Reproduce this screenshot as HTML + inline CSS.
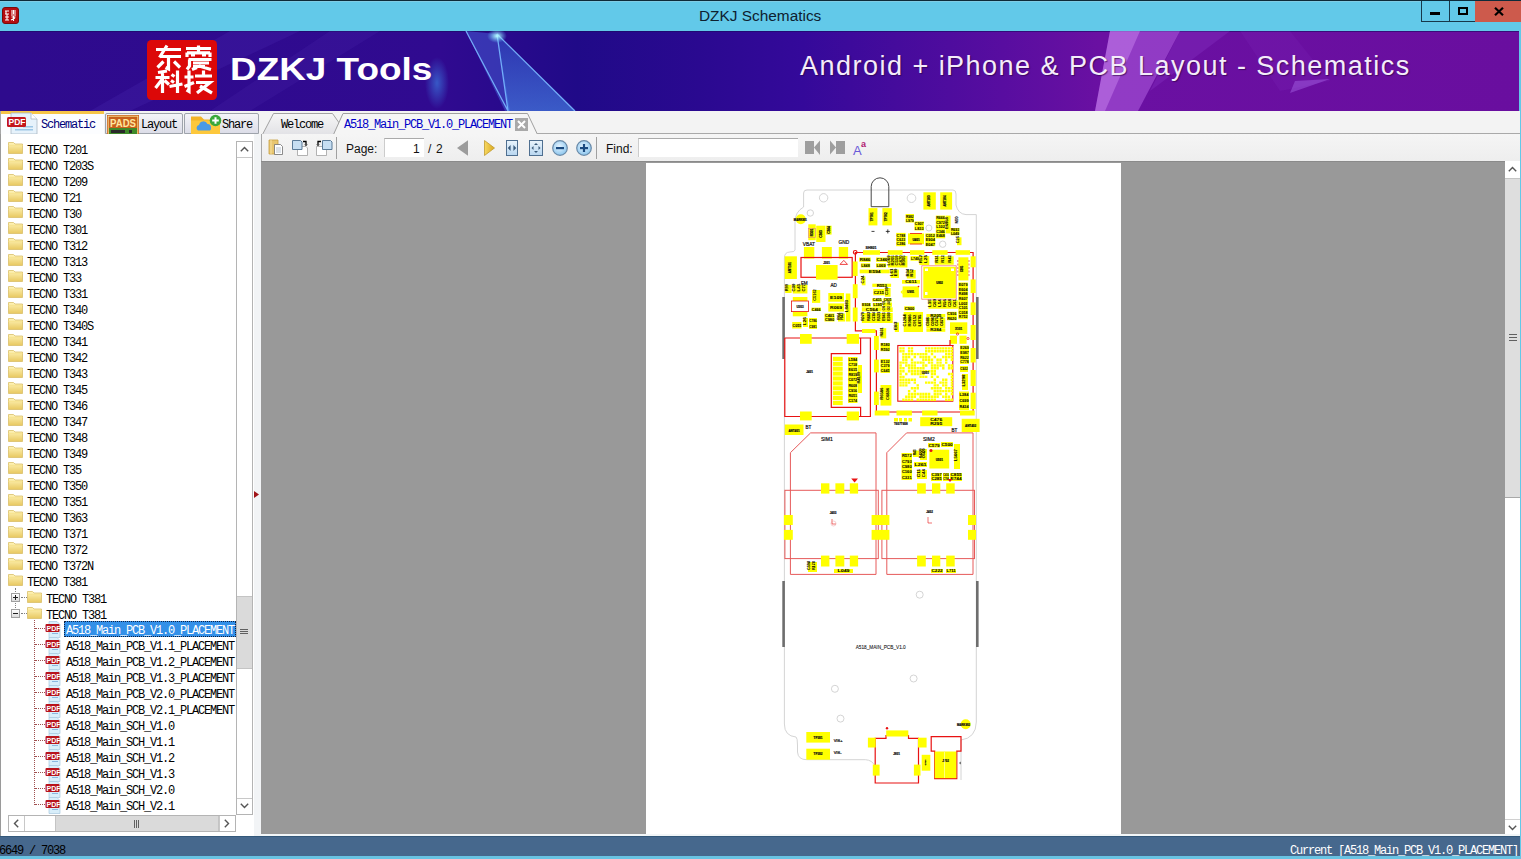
<!DOCTYPE html><html><head><meta charset="utf-8"><style>
*{margin:0;padding:0;box-sizing:border-box}
html,body{width:1521px;height:859px;overflow:hidden;background:#62c9e9;font-family:"Liberation Sans",sans-serif}
.a{position:absolute}
.m{position:absolute;font-family:"Liberation Mono",monospace;font-size:12px;letter-spacing:-1.2px;white-space:pre;line-height:14px}
svg{position:absolute;overflow:visible}
</style></head><body>
<div class="a" style="left:0px;top:0px;width:1521px;height:1px;background:#0d2b3a"></div>
<div class="a" style="left:0px;top:1px;width:1521px;height:1px;background:#7fcde6"></div>
<div class="a" style="left:0px;top:2px;width:1521px;height:29px;background:#62c9e9"></div>
<svg style="left:2px;top:7px" width="17" height="17" viewBox="0 0 17 17">
<rect x="0.5" y="0.5" width="16" height="16" rx="2.5" fill="#b40d10" stroke="#7a0a0a" stroke-width="1"/>
<path d="M3 4h4M4 4v3M3 7h4M5 7v3M3 10h4M3 13h4M5 10v3" stroke="#fff" stroke-width="1.1" fill="none"/>
<path d="M9 4h5M11.5 3v4M9 6h5M9 8h5M9.5 10h4M11.5 9v5M9 13l4-2" stroke="#fff" stroke-width="1.1" fill="none"/>
</svg>
<div class="a" style="left:699px;top:7px;font-size:15.4px;color:#0e2130;white-space:pre;line-height:17px">DZKJ Schematics</div>
<div class="a" style="left:1421px;top:1px;width:55px;height:21px;border:1px solid #17384a;border-top:none;background:#62c9e9"></div>
<div class="a" style="left:1449px;top:1px;width:1px;height:20px;background:#17384a"></div>
<div class="a" style="left:1430px;top:12px;width:10px;height:3px;background:#000"></div>
<div class="a" style="left:1458px;top:7px;width:10px;height:8px;border:2px solid #000;border-top-width:2px"></div>
<div class="a" style="left:1475px;top:1px;width:46px;height:21px;background:#cd5a4c"></div>
<svg style="left:1494px;top:7px" width="10" height="9" viewBox="0 0 10 9"><path d="M1 0.8L9 8.2M9 0.8L1 8.2" stroke="#000" stroke-width="2.2"/></svg>
<svg style="left:0;top:31px" width="1519" height="80" viewBox="0 0 1519 80">
<defs>
<linearGradient id="bg" x1="0" x2="1" y1="0" y2="0">
<stop offset="0" stop-color="#2e0b8d"/>
<stop offset="0.29" stop-color="#300a90"/>
<stop offset="0.38" stop-color="#200a88"/>
<stop offset="0.46" stop-color="#2a0990"/>
<stop offset="0.527" stop-color="#34099a"/>
<stop offset="0.59" stop-color="#450b9c"/>
<stop offset="0.66" stop-color="#580da0"/>
<stop offset="0.724" stop-color="#6a10a2"/>
<stop offset="1" stop-color="#690e9f"/>
</linearGradient>
<radialGradient id="glow" cx="0.5" cy="0.5" r="0.5">
<stop offset="0" stop-color="#3fa8ff" stop-opacity="0.9"/>
<stop offset="1" stop-color="#3fa8ff" stop-opacity="0"/>
</radialGradient>
<radialGradient id="glow2" cx="0.5" cy="0.5" r="0.5">
<stop offset="0" stop-color="#bff" stop-opacity="1"/>
<stop offset="1" stop-color="#6cf" stop-opacity="0"/>
</radialGradient>
<linearGradient id="tri" x1="0" x2="0" y1="0" y2="1"><stop offset="0" stop-color="#3050c8"/><stop offset="1" stop-color="#4a90f0"/></linearGradient>
</defs>
<rect width="1519" height="80" fill="url(#bg)"/>
<rect x="0" y="0" width="1519" height="1" fill="#1a0a60" opacity="0.6"/>
<polygon points="230,0 300,0 130,80 90,80" fill="#5a3ac0" opacity="0.18"/>
<polygon points="330,0 380,0 250,80 210,80" fill="#6a4ad0" opacity="0.10"/>
<polygon points="466,0 497,3 510,80 505,80" fill="#4a6ae0" opacity="0.45"/>
<polygon points="497,3 575,80 508,80" fill="url(#tri)" opacity="0.6"/>
<path d="M466 0L508 80M497 3L508 80M497 3L575 80" stroke="#79b8ff" stroke-width="1.3" fill="none" opacity="0.9"/>
<ellipse cx="497" cy="5" rx="10" ry="7" fill="url(#glow2)"/>
<ellipse cx="437" cy="52" rx="12" ry="26" fill="url(#glow)" opacity="0.55"/>
<polygon points="1110,0 1180,0 1138,80 1095,80" fill="#c070f0" opacity="0.45"/>
<polygon points="1110,0 1140,0 1105,80 1095,80" fill="#e0a0ff" opacity="0.35"/>
<polygon points="1180,0 1230,0 1150,60" fill="#a050e0" opacity="0.2"/>
<polygon points="1240,0 1290,0 1330,50 1280,60" fill="#8a3ad0" opacity="0.12"/>
<polygon points="1295,50 1330,48 1290,62" fill="#b070f0" opacity="0.4"/>
</svg>
<svg style="left:147px;top:40px" width="71" height="60" viewBox="0 0 71 60">
<rect x="0" y="0" width="70" height="60" rx="4.5" fill="#dc0808"/>
<g stroke="#fff" stroke-width="3.2" fill="none" stroke-linecap="butt" stroke-linejoin="miter">
<path d="M9 9.5h25M20 5.5L12.5 17.5M13 16.5h21M21.5 16.5v12.5l-3-1.5M16.5 21.5L10.5 27.5M27 21.5l6 6"/>
<path d="M39 8.5h25M51.5 5.5v7M40 12.5v4.5M63 12.5v4.5M40 12.8h23M44 15h4M55 15h4M41.5 19.5h23M42.5 19.5v6.5l-2.5 3.5M46 23h16M46 26.5h12M52 26l12 3.5M45 29.5l5-2"/>
<path d="M11 32.5l9-1.5M8.5 37.5h14M15.5 31.5v21.5M15 39.5L8.5 48M17.5 40.5l4.5 4M24.5 34.5l3 2M24 40.5l3 2M22.5 46.5l13-2.5M30.5 30.5v22.5"/>
<path d="M37.5 37h9M42 30.5v21l-2.5-1.5M37.5 46.5l9.5-4M48 36h17M56.5 30.5v6M49 42.5h14L50 53M53 46l12 7"/>
</g>
</svg>
<div class="a" style="left:230px;top:52px;font-size:31px;font-weight:700;color:#fff;white-space:pre;line-height:36px;transform-origin:0 0;transform:scaleX(1.19)">DZKJ Tools</div>
<div class="a" style="left:800px;top:51px;font-size:27px;color:#f4ecfa;white-space:pre;line-height:30px;letter-spacing:1.48px;text-shadow:1px 1px 1px rgba(40,0,60,0.6)">Android + iPhone &amp; PCB Layout - Schematics</div>
<div class="a" style="left:0px;top:111px;width:1521px;height:23px;background:#f3f3f3"></div>
<div class="a" style="left:0px;top:111px;width:104px;height:25px;background:#fcfdff;border-left:1px solid #a8a8a8"></div>
<div class="a" style="left:1px;top:111px;width:103px;height:3px;background:#f6c548"></div>
<svg style="left:6px;top:113px" width="34" height="22" viewBox="0 0 34 22">
<path d="M5 0h20l6 6v15H5z" fill="#e6f2fb" stroke="#a9b7c4" stroke-width="0.8"/>
<path d="M25 0v6h6" fill="#fff" stroke="#a9b7c4" stroke-width="0.8"/>
<rect x="17" y="13" width="10" height="1.5" fill="#9cc6e6"/><rect x="9" y="16" width="18" height="1.5" fill="#9cc6e6"/>
<rect x="1" y="4" width="19" height="10" rx="1.5" fill="#c3161c"/>
<text x="2.5" y="12.3" font-family="Liberation Sans" font-weight="700" font-size="8.5" fill="#fff">PDF</text>
</svg>
<div class="m" style="left:41px;top:118px;color:#00007a;">Schematic</div>
<div class="a" style="left:105px;top:113px;width:78px;height:21px;background:linear-gradient(#f4f4f8,#dcdde8);border:1px solid #9ea3ab;border-radius:2px 2px 0 0"></div>
<svg style="left:107px;top:115px" width="32" height="19" viewBox="0 0 32 19">
<rect x="0" y="0" width="32" height="19" fill="#c8601c"/>
<rect x="1.2" y="1.2" width="29.6" height="17" fill="none" stroke="#f6e090" stroke-width="0.9"/>
<text x="3" y="11.5" font-family="Liberation Sans" font-weight="700" font-size="11" fill="#ffe7a0" textLength="26" lengthAdjust="spacingAndGlyphs">PADS</text>
<rect x="2" y="13" width="28" height="6" fill="#3f8a2a"/>
<rect x="4" y="15" width="14" height="3" fill="#2a2a2a"/>
<rect x="22" y="15" width="3" height="3" fill="#2a2a2a"/>
</svg>
<div class="m" style="left:141px;top:118px;color:#000;">Layout</div>
<div class="a" style="left:184px;top:113px;width:75px;height:21px;background:linear-gradient(#f4f4f8,#dcdde8);border:1px solid #9ea3ab;border-radius:2px 2px 0 0"></div>
<svg style="left:190px;top:114px" width="32" height="20" viewBox="0 0 32 20">
<path d="M1 2.5h10l3 3h16v14.5H1z" fill="#f3b428"/>
<path d="M1 6.5h29v13.5H1z" fill="#fdc83c"/>
<path d="M8 16.5a3 3 0 0 1 1-5.5a4.5 4.5 0 0 1 8.5-1a3.5 3.5 0 0 1 3.5 3.5a2.8 2.8 0 0 1-1 3z" fill="#4a9ae6"/>
<circle cx="25.5" cy="6.5" r="5.8" fill="#3aa83a"/>
<path d="M25.5 3.2v6.6M22.2 6.5h6.6" stroke="#fff" stroke-width="2"/>
</svg>
<div class="m" style="left:222px;top:118px;color:#000;">Share</div>
<svg style="left:258px;top:111px" width="300" height="24" viewBox="0 0 300 24">
<defs><linearGradient id="tg" x1="0" x2="0" y1="0" y2="1"><stop offset="0" stop-color="#f6f6f6"/><stop offset="1" stop-color="#e2e2e6"/></linearGradient></defs>
<path d="M4.5 23.5L15.5 2.5H74.5L84 16L79 23.5Z" fill="url(#tg)" stroke="#a2a2a2" stroke-width="1"/>
<path d="M75.5 23.5L85 2.5H269.5L279.5 23.5" fill="#f5f5f5" stroke="#a0a0a0" stroke-width="1"/>
<rect x="257" y="7" width="13" height="13" fill="#a9a9a9"/>
<path d="M260 10l7 7M267 10l-7 7" stroke="#fff" stroke-width="2"/>
</svg>
<div class="a" style="left:537px;top:133px;width:983px;height:1px;background:#a9a9a9"></div>
<div class="m" style="left:281px;top:118px;color:#000;">Welcome</div>
<div class="m" style="left:344px;top:118px;color:#0000c8;">A518_Main_PCB_V1.0_PLACEMENT</div>
<div class="a" style="left:0px;top:134px;width:261px;height:702px;background:#fff"></div>
<div class="a" style="left:0px;top:134px;width:1px;height:702px;background:#9a9a9a"></div>
<div class="a" style="left:254px;top:134px;width:7px;height:702px;background:#f2f4f6"></div>
<svg style="left:254px;top:491px" width="5" height="7" viewBox="0 0 5 7"><path d="M0 0L5 3.5L0 7Z" fill="#a01418"/></svg>
<svg style="left:8px;top:141px" width="15" height="13" viewBox="0 0 15 13">
<defs><linearGradient id="fg0" x1="0" x2="0" y1="0" y2="1"><stop offset="0" stop-color="#fff4b8"/><stop offset="1" stop-color="#e8c860"/></linearGradient></defs>
<path d="M0.5 1.5h5l1.5 1.5h7.5v9.5H0.5z" fill="url(#fg0)" stroke="#d9bf6a" stroke-width="0.8"/>
<path d="M0.5 4.5h14" stroke="#f6e28e" stroke-width="0.8"/>
</svg>
<div class="m" style="left:27px;top:144px;color:#000;">TECNO T201</div>
<svg style="left:8px;top:157px" width="15" height="13" viewBox="0 0 15 13">
<defs><linearGradient id="fg1" x1="0" x2="0" y1="0" y2="1"><stop offset="0" stop-color="#fff4b8"/><stop offset="1" stop-color="#e8c860"/></linearGradient></defs>
<path d="M0.5 1.5h5l1.5 1.5h7.5v9.5H0.5z" fill="url(#fg1)" stroke="#d9bf6a" stroke-width="0.8"/>
<path d="M0.5 4.5h14" stroke="#f6e28e" stroke-width="0.8"/>
</svg>
<div class="m" style="left:27px;top:160px;color:#000;">TECNO T203S</div>
<svg style="left:8px;top:173px" width="15" height="13" viewBox="0 0 15 13">
<defs><linearGradient id="fg2" x1="0" x2="0" y1="0" y2="1"><stop offset="0" stop-color="#fff4b8"/><stop offset="1" stop-color="#e8c860"/></linearGradient></defs>
<path d="M0.5 1.5h5l1.5 1.5h7.5v9.5H0.5z" fill="url(#fg2)" stroke="#d9bf6a" stroke-width="0.8"/>
<path d="M0.5 4.5h14" stroke="#f6e28e" stroke-width="0.8"/>
</svg>
<div class="m" style="left:27px;top:176px;color:#000;">TECNO T209</div>
<svg style="left:8px;top:189px" width="15" height="13" viewBox="0 0 15 13">
<defs><linearGradient id="fg3" x1="0" x2="0" y1="0" y2="1"><stop offset="0" stop-color="#fff4b8"/><stop offset="1" stop-color="#e8c860"/></linearGradient></defs>
<path d="M0.5 1.5h5l1.5 1.5h7.5v9.5H0.5z" fill="url(#fg3)" stroke="#d9bf6a" stroke-width="0.8"/>
<path d="M0.5 4.5h14" stroke="#f6e28e" stroke-width="0.8"/>
</svg>
<div class="m" style="left:27px;top:192px;color:#000;">TECNO T21</div>
<svg style="left:8px;top:205px" width="15" height="13" viewBox="0 0 15 13">
<defs><linearGradient id="fg4" x1="0" x2="0" y1="0" y2="1"><stop offset="0" stop-color="#fff4b8"/><stop offset="1" stop-color="#e8c860"/></linearGradient></defs>
<path d="M0.5 1.5h5l1.5 1.5h7.5v9.5H0.5z" fill="url(#fg4)" stroke="#d9bf6a" stroke-width="0.8"/>
<path d="M0.5 4.5h14" stroke="#f6e28e" stroke-width="0.8"/>
</svg>
<div class="m" style="left:27px;top:208px;color:#000;">TECNO T30</div>
<svg style="left:8px;top:221px" width="15" height="13" viewBox="0 0 15 13">
<defs><linearGradient id="fg5" x1="0" x2="0" y1="0" y2="1"><stop offset="0" stop-color="#fff4b8"/><stop offset="1" stop-color="#e8c860"/></linearGradient></defs>
<path d="M0.5 1.5h5l1.5 1.5h7.5v9.5H0.5z" fill="url(#fg5)" stroke="#d9bf6a" stroke-width="0.8"/>
<path d="M0.5 4.5h14" stroke="#f6e28e" stroke-width="0.8"/>
</svg>
<div class="m" style="left:27px;top:224px;color:#000;">TECNO T301</div>
<svg style="left:8px;top:237px" width="15" height="13" viewBox="0 0 15 13">
<defs><linearGradient id="fg6" x1="0" x2="0" y1="0" y2="1"><stop offset="0" stop-color="#fff4b8"/><stop offset="1" stop-color="#e8c860"/></linearGradient></defs>
<path d="M0.5 1.5h5l1.5 1.5h7.5v9.5H0.5z" fill="url(#fg6)" stroke="#d9bf6a" stroke-width="0.8"/>
<path d="M0.5 4.5h14" stroke="#f6e28e" stroke-width="0.8"/>
</svg>
<div class="m" style="left:27px;top:240px;color:#000;">TECNO T312</div>
<svg style="left:8px;top:253px" width="15" height="13" viewBox="0 0 15 13">
<defs><linearGradient id="fg7" x1="0" x2="0" y1="0" y2="1"><stop offset="0" stop-color="#fff4b8"/><stop offset="1" stop-color="#e8c860"/></linearGradient></defs>
<path d="M0.5 1.5h5l1.5 1.5h7.5v9.5H0.5z" fill="url(#fg7)" stroke="#d9bf6a" stroke-width="0.8"/>
<path d="M0.5 4.5h14" stroke="#f6e28e" stroke-width="0.8"/>
</svg>
<div class="m" style="left:27px;top:256px;color:#000;">TECNO T313</div>
<svg style="left:8px;top:269px" width="15" height="13" viewBox="0 0 15 13">
<defs><linearGradient id="fg8" x1="0" x2="0" y1="0" y2="1"><stop offset="0" stop-color="#fff4b8"/><stop offset="1" stop-color="#e8c860"/></linearGradient></defs>
<path d="M0.5 1.5h5l1.5 1.5h7.5v9.5H0.5z" fill="url(#fg8)" stroke="#d9bf6a" stroke-width="0.8"/>
<path d="M0.5 4.5h14" stroke="#f6e28e" stroke-width="0.8"/>
</svg>
<div class="m" style="left:27px;top:272px;color:#000;">TECNO T33</div>
<svg style="left:8px;top:285px" width="15" height="13" viewBox="0 0 15 13">
<defs><linearGradient id="fg9" x1="0" x2="0" y1="0" y2="1"><stop offset="0" stop-color="#fff4b8"/><stop offset="1" stop-color="#e8c860"/></linearGradient></defs>
<path d="M0.5 1.5h5l1.5 1.5h7.5v9.5H0.5z" fill="url(#fg9)" stroke="#d9bf6a" stroke-width="0.8"/>
<path d="M0.5 4.5h14" stroke="#f6e28e" stroke-width="0.8"/>
</svg>
<div class="m" style="left:27px;top:288px;color:#000;">TECNO T331</div>
<svg style="left:8px;top:301px" width="15" height="13" viewBox="0 0 15 13">
<defs><linearGradient id="fg10" x1="0" x2="0" y1="0" y2="1"><stop offset="0" stop-color="#fff4b8"/><stop offset="1" stop-color="#e8c860"/></linearGradient></defs>
<path d="M0.5 1.5h5l1.5 1.5h7.5v9.5H0.5z" fill="url(#fg10)" stroke="#d9bf6a" stroke-width="0.8"/>
<path d="M0.5 4.5h14" stroke="#f6e28e" stroke-width="0.8"/>
</svg>
<div class="m" style="left:27px;top:304px;color:#000;">TECNO T340</div>
<svg style="left:8px;top:317px" width="15" height="13" viewBox="0 0 15 13">
<defs><linearGradient id="fg11" x1="0" x2="0" y1="0" y2="1"><stop offset="0" stop-color="#fff4b8"/><stop offset="1" stop-color="#e8c860"/></linearGradient></defs>
<path d="M0.5 1.5h5l1.5 1.5h7.5v9.5H0.5z" fill="url(#fg11)" stroke="#d9bf6a" stroke-width="0.8"/>
<path d="M0.5 4.5h14" stroke="#f6e28e" stroke-width="0.8"/>
</svg>
<div class="m" style="left:27px;top:320px;color:#000;">TECNO T340S</div>
<svg style="left:8px;top:333px" width="15" height="13" viewBox="0 0 15 13">
<defs><linearGradient id="fg12" x1="0" x2="0" y1="0" y2="1"><stop offset="0" stop-color="#fff4b8"/><stop offset="1" stop-color="#e8c860"/></linearGradient></defs>
<path d="M0.5 1.5h5l1.5 1.5h7.5v9.5H0.5z" fill="url(#fg12)" stroke="#d9bf6a" stroke-width="0.8"/>
<path d="M0.5 4.5h14" stroke="#f6e28e" stroke-width="0.8"/>
</svg>
<div class="m" style="left:27px;top:336px;color:#000;">TECNO T341</div>
<svg style="left:8px;top:349px" width="15" height="13" viewBox="0 0 15 13">
<defs><linearGradient id="fg13" x1="0" x2="0" y1="0" y2="1"><stop offset="0" stop-color="#fff4b8"/><stop offset="1" stop-color="#e8c860"/></linearGradient></defs>
<path d="M0.5 1.5h5l1.5 1.5h7.5v9.5H0.5z" fill="url(#fg13)" stroke="#d9bf6a" stroke-width="0.8"/>
<path d="M0.5 4.5h14" stroke="#f6e28e" stroke-width="0.8"/>
</svg>
<div class="m" style="left:27px;top:352px;color:#000;">TECNO T342</div>
<svg style="left:8px;top:365px" width="15" height="13" viewBox="0 0 15 13">
<defs><linearGradient id="fg14" x1="0" x2="0" y1="0" y2="1"><stop offset="0" stop-color="#fff4b8"/><stop offset="1" stop-color="#e8c860"/></linearGradient></defs>
<path d="M0.5 1.5h5l1.5 1.5h7.5v9.5H0.5z" fill="url(#fg14)" stroke="#d9bf6a" stroke-width="0.8"/>
<path d="M0.5 4.5h14" stroke="#f6e28e" stroke-width="0.8"/>
</svg>
<div class="m" style="left:27px;top:368px;color:#000;">TECNO T343</div>
<svg style="left:8px;top:381px" width="15" height="13" viewBox="0 0 15 13">
<defs><linearGradient id="fg15" x1="0" x2="0" y1="0" y2="1"><stop offset="0" stop-color="#fff4b8"/><stop offset="1" stop-color="#e8c860"/></linearGradient></defs>
<path d="M0.5 1.5h5l1.5 1.5h7.5v9.5H0.5z" fill="url(#fg15)" stroke="#d9bf6a" stroke-width="0.8"/>
<path d="M0.5 4.5h14" stroke="#f6e28e" stroke-width="0.8"/>
</svg>
<div class="m" style="left:27px;top:384px;color:#000;">TECNO T345</div>
<svg style="left:8px;top:397px" width="15" height="13" viewBox="0 0 15 13">
<defs><linearGradient id="fg16" x1="0" x2="0" y1="0" y2="1"><stop offset="0" stop-color="#fff4b8"/><stop offset="1" stop-color="#e8c860"/></linearGradient></defs>
<path d="M0.5 1.5h5l1.5 1.5h7.5v9.5H0.5z" fill="url(#fg16)" stroke="#d9bf6a" stroke-width="0.8"/>
<path d="M0.5 4.5h14" stroke="#f6e28e" stroke-width="0.8"/>
</svg>
<div class="m" style="left:27px;top:400px;color:#000;">TECNO T346</div>
<svg style="left:8px;top:413px" width="15" height="13" viewBox="0 0 15 13">
<defs><linearGradient id="fg17" x1="0" x2="0" y1="0" y2="1"><stop offset="0" stop-color="#fff4b8"/><stop offset="1" stop-color="#e8c860"/></linearGradient></defs>
<path d="M0.5 1.5h5l1.5 1.5h7.5v9.5H0.5z" fill="url(#fg17)" stroke="#d9bf6a" stroke-width="0.8"/>
<path d="M0.5 4.5h14" stroke="#f6e28e" stroke-width="0.8"/>
</svg>
<div class="m" style="left:27px;top:416px;color:#000;">TECNO T347</div>
<svg style="left:8px;top:429px" width="15" height="13" viewBox="0 0 15 13">
<defs><linearGradient id="fg18" x1="0" x2="0" y1="0" y2="1"><stop offset="0" stop-color="#fff4b8"/><stop offset="1" stop-color="#e8c860"/></linearGradient></defs>
<path d="M0.5 1.5h5l1.5 1.5h7.5v9.5H0.5z" fill="url(#fg18)" stroke="#d9bf6a" stroke-width="0.8"/>
<path d="M0.5 4.5h14" stroke="#f6e28e" stroke-width="0.8"/>
</svg>
<div class="m" style="left:27px;top:432px;color:#000;">TECNO T348</div>
<svg style="left:8px;top:445px" width="15" height="13" viewBox="0 0 15 13">
<defs><linearGradient id="fg19" x1="0" x2="0" y1="0" y2="1"><stop offset="0" stop-color="#fff4b8"/><stop offset="1" stop-color="#e8c860"/></linearGradient></defs>
<path d="M0.5 1.5h5l1.5 1.5h7.5v9.5H0.5z" fill="url(#fg19)" stroke="#d9bf6a" stroke-width="0.8"/>
<path d="M0.5 4.5h14" stroke="#f6e28e" stroke-width="0.8"/>
</svg>
<div class="m" style="left:27px;top:448px;color:#000;">TECNO T349</div>
<svg style="left:8px;top:461px" width="15" height="13" viewBox="0 0 15 13">
<defs><linearGradient id="fg20" x1="0" x2="0" y1="0" y2="1"><stop offset="0" stop-color="#fff4b8"/><stop offset="1" stop-color="#e8c860"/></linearGradient></defs>
<path d="M0.5 1.5h5l1.5 1.5h7.5v9.5H0.5z" fill="url(#fg20)" stroke="#d9bf6a" stroke-width="0.8"/>
<path d="M0.5 4.5h14" stroke="#f6e28e" stroke-width="0.8"/>
</svg>
<div class="m" style="left:27px;top:464px;color:#000;">TECNO T35</div>
<svg style="left:8px;top:477px" width="15" height="13" viewBox="0 0 15 13">
<defs><linearGradient id="fg21" x1="0" x2="0" y1="0" y2="1"><stop offset="0" stop-color="#fff4b8"/><stop offset="1" stop-color="#e8c860"/></linearGradient></defs>
<path d="M0.5 1.5h5l1.5 1.5h7.5v9.5H0.5z" fill="url(#fg21)" stroke="#d9bf6a" stroke-width="0.8"/>
<path d="M0.5 4.5h14" stroke="#f6e28e" stroke-width="0.8"/>
</svg>
<div class="m" style="left:27px;top:480px;color:#000;">TECNO T350</div>
<svg style="left:8px;top:493px" width="15" height="13" viewBox="0 0 15 13">
<defs><linearGradient id="fg22" x1="0" x2="0" y1="0" y2="1"><stop offset="0" stop-color="#fff4b8"/><stop offset="1" stop-color="#e8c860"/></linearGradient></defs>
<path d="M0.5 1.5h5l1.5 1.5h7.5v9.5H0.5z" fill="url(#fg22)" stroke="#d9bf6a" stroke-width="0.8"/>
<path d="M0.5 4.5h14" stroke="#f6e28e" stroke-width="0.8"/>
</svg>
<div class="m" style="left:27px;top:496px;color:#000;">TECNO T351</div>
<svg style="left:8px;top:509px" width="15" height="13" viewBox="0 0 15 13">
<defs><linearGradient id="fg23" x1="0" x2="0" y1="0" y2="1"><stop offset="0" stop-color="#fff4b8"/><stop offset="1" stop-color="#e8c860"/></linearGradient></defs>
<path d="M0.5 1.5h5l1.5 1.5h7.5v9.5H0.5z" fill="url(#fg23)" stroke="#d9bf6a" stroke-width="0.8"/>
<path d="M0.5 4.5h14" stroke="#f6e28e" stroke-width="0.8"/>
</svg>
<div class="m" style="left:27px;top:512px;color:#000;">TECNO T363</div>
<svg style="left:8px;top:525px" width="15" height="13" viewBox="0 0 15 13">
<defs><linearGradient id="fg24" x1="0" x2="0" y1="0" y2="1"><stop offset="0" stop-color="#fff4b8"/><stop offset="1" stop-color="#e8c860"/></linearGradient></defs>
<path d="M0.5 1.5h5l1.5 1.5h7.5v9.5H0.5z" fill="url(#fg24)" stroke="#d9bf6a" stroke-width="0.8"/>
<path d="M0.5 4.5h14" stroke="#f6e28e" stroke-width="0.8"/>
</svg>
<div class="m" style="left:27px;top:528px;color:#000;">TECNO T371</div>
<svg style="left:8px;top:541px" width="15" height="13" viewBox="0 0 15 13">
<defs><linearGradient id="fg25" x1="0" x2="0" y1="0" y2="1"><stop offset="0" stop-color="#fff4b8"/><stop offset="1" stop-color="#e8c860"/></linearGradient></defs>
<path d="M0.5 1.5h5l1.5 1.5h7.5v9.5H0.5z" fill="url(#fg25)" stroke="#d9bf6a" stroke-width="0.8"/>
<path d="M0.5 4.5h14" stroke="#f6e28e" stroke-width="0.8"/>
</svg>
<div class="m" style="left:27px;top:544px;color:#000;">TECNO T372</div>
<svg style="left:8px;top:557px" width="15" height="13" viewBox="0 0 15 13">
<defs><linearGradient id="fg26" x1="0" x2="0" y1="0" y2="1"><stop offset="0" stop-color="#fff4b8"/><stop offset="1" stop-color="#e8c860"/></linearGradient></defs>
<path d="M0.5 1.5h5l1.5 1.5h7.5v9.5H0.5z" fill="url(#fg26)" stroke="#d9bf6a" stroke-width="0.8"/>
<path d="M0.5 4.5h14" stroke="#f6e28e" stroke-width="0.8"/>
</svg>
<div class="m" style="left:27px;top:560px;color:#000;">TECNO T372N</div>
<svg style="left:8px;top:573px" width="15" height="13" viewBox="0 0 15 13">
<defs><linearGradient id="fg27" x1="0" x2="0" y1="0" y2="1"><stop offset="0" stop-color="#fff4b8"/><stop offset="1" stop-color="#e8c860"/></linearGradient></defs>
<path d="M0.5 1.5h5l1.5 1.5h7.5v9.5H0.5z" fill="url(#fg27)" stroke="#d9bf6a" stroke-width="0.8"/>
<path d="M0.5 4.5h14" stroke="#f6e28e" stroke-width="0.8"/>
</svg>
<div class="m" style="left:27px;top:576px;color:#000;">TECNO T381</div>
<div class="a" style="left:15px;top:588px;width:1px;height:22px;border-left:1px dotted #808080"></div>
<div class="a" style="left:11px;top:593px;width:9px;height:9px;border:1px solid #a0a0a0;background:linear-gradient(#fff,#dcdcdc)"></div>
<div class="a" style="left:13px;top:597px;width:5px;height:1px;background:#202020"></div>
<div class="a" style="left:15px;top:595px;width:1px;height:5px;background:#202020"></div>
<div class="a" style="left:21px;top:597px;width:6px;height:1px;border-top:1px dotted #808080"></div>
<svg style="left:27px;top:590px" width="15" height="13" viewBox="0 0 15 13">
<defs><linearGradient id="fg28" x1="0" x2="0" y1="0" y2="1"><stop offset="0" stop-color="#fff4b8"/><stop offset="1" stop-color="#e8c860"/></linearGradient></defs>
<path d="M0.5 1.5h5l1.5 1.5h7.5v9.5H0.5z" fill="url(#fg28)" stroke="#d9bf6a" stroke-width="0.8"/>
<path d="M0.5 4.5h14" stroke="#f6e28e" stroke-width="0.8"/>
</svg>
<div class="m" style="left:46px;top:593px;color:#000;">TECNO T381</div>
<div class="a" style="left:11px;top:609px;width:9px;height:9px;border:1px solid #a0a0a0;background:linear-gradient(#fff,#dcdcdc)"></div>
<div class="a" style="left:13px;top:613px;width:5px;height:1px;background:#202020"></div>
<div class="a" style="left:21px;top:613px;width:6px;height:1px;border-top:1px dotted #808080"></div>
<svg style="left:27px;top:606px" width="15" height="13" viewBox="0 0 15 13">
<defs><linearGradient id="fg29" x1="0" x2="0" y1="0" y2="1"><stop offset="0" stop-color="#fff4b8"/><stop offset="1" stop-color="#e8c860"/></linearGradient></defs>
<path d="M0.5 1.5h5l1.5 1.5h7.5v9.5H0.5z" fill="url(#fg29)" stroke="#d9bf6a" stroke-width="0.8"/>
<path d="M0.5 4.5h14" stroke="#f6e28e" stroke-width="0.8"/>
</svg>
<div class="m" style="left:46px;top:609px;color:#000;">TECNO T381</div>
<div class="a" style="left:34px;top:620px;width:1px;height:185px;border-left:1px dotted #a05050"></div>
<div class="a" style="left:35px;top:628px;width:10px;height:1px;border-top:1px dotted #a05050"></div>
<svg style="left:45px;top:621px" width="16" height="17" viewBox="0 0 16 17">
<path d="M4 0.5h8l3 3v13H4z" fill="#d8eefa" stroke="#a8c8e0" stroke-width="0.7"/>
<rect x="7" y="12" width="6" height="1" fill="#8ab8e0"/>
<rect x="0.5" y="3" width="14" height="8" rx="1" fill="#b8141c"/>
<text x="1.6" y="9.6" font-family="Liberation Sans" font-weight="700" font-size="7" fill="#fff">PDF</text>
</svg>
<div class="a" style="left:64px;top:621px;width:172px;height:16px;background:#3390e8;outline:1px dotted #102040;outline-offset:-1px"></div>
<div class="m" style="left:66px;top:624px;color:#fff;">A518_Main_PCB_V1.0_PLACEMENT</div>
<div class="a" style="left:35px;top:644px;width:10px;height:1px;border-top:1px dotted #a05050"></div>
<svg style="left:45px;top:637px" width="16" height="17" viewBox="0 0 16 17">
<path d="M4 0.5h8l3 3v13H4z" fill="#d8eefa" stroke="#a8c8e0" stroke-width="0.7"/>
<rect x="7" y="12" width="6" height="1" fill="#8ab8e0"/>
<rect x="0.5" y="3" width="14" height="8" rx="1" fill="#b8141c"/>
<text x="1.6" y="9.6" font-family="Liberation Sans" font-weight="700" font-size="7" fill="#fff">PDF</text>
</svg>
<div class="m" style="left:66px;top:640px;color:#000;">A518_Main_PCB_V1.1_PLACEMENT</div>
<div class="a" style="left:35px;top:660px;width:10px;height:1px;border-top:1px dotted #a05050"></div>
<svg style="left:45px;top:653px" width="16" height="17" viewBox="0 0 16 17">
<path d="M4 0.5h8l3 3v13H4z" fill="#d8eefa" stroke="#a8c8e0" stroke-width="0.7"/>
<rect x="7" y="12" width="6" height="1" fill="#8ab8e0"/>
<rect x="0.5" y="3" width="14" height="8" rx="1" fill="#b8141c"/>
<text x="1.6" y="9.6" font-family="Liberation Sans" font-weight="700" font-size="7" fill="#fff">PDF</text>
</svg>
<div class="m" style="left:66px;top:656px;color:#000;">A518_Main_PCB_V1.2_PLACEMENT</div>
<div class="a" style="left:35px;top:676px;width:10px;height:1px;border-top:1px dotted #a05050"></div>
<svg style="left:45px;top:669px" width="16" height="17" viewBox="0 0 16 17">
<path d="M4 0.5h8l3 3v13H4z" fill="#d8eefa" stroke="#a8c8e0" stroke-width="0.7"/>
<rect x="7" y="12" width="6" height="1" fill="#8ab8e0"/>
<rect x="0.5" y="3" width="14" height="8" rx="1" fill="#b8141c"/>
<text x="1.6" y="9.6" font-family="Liberation Sans" font-weight="700" font-size="7" fill="#fff">PDF</text>
</svg>
<div class="m" style="left:66px;top:672px;color:#000;">A518_Main_PCB_V1.3_PLACEMENT</div>
<div class="a" style="left:35px;top:692px;width:10px;height:1px;border-top:1px dotted #a05050"></div>
<svg style="left:45px;top:685px" width="16" height="17" viewBox="0 0 16 17">
<path d="M4 0.5h8l3 3v13H4z" fill="#d8eefa" stroke="#a8c8e0" stroke-width="0.7"/>
<rect x="7" y="12" width="6" height="1" fill="#8ab8e0"/>
<rect x="0.5" y="3" width="14" height="8" rx="1" fill="#b8141c"/>
<text x="1.6" y="9.6" font-family="Liberation Sans" font-weight="700" font-size="7" fill="#fff">PDF</text>
</svg>
<div class="m" style="left:66px;top:688px;color:#000;">A518_Main_PCB_V2.0_PLACEMENT</div>
<div class="a" style="left:35px;top:708px;width:10px;height:1px;border-top:1px dotted #a05050"></div>
<svg style="left:45px;top:701px" width="16" height="17" viewBox="0 0 16 17">
<path d="M4 0.5h8l3 3v13H4z" fill="#d8eefa" stroke="#a8c8e0" stroke-width="0.7"/>
<rect x="7" y="12" width="6" height="1" fill="#8ab8e0"/>
<rect x="0.5" y="3" width="14" height="8" rx="1" fill="#b8141c"/>
<text x="1.6" y="9.6" font-family="Liberation Sans" font-weight="700" font-size="7" fill="#fff">PDF</text>
</svg>
<div class="m" style="left:66px;top:704px;color:#000;">A518_Main_PCB_V2.1_PLACEMENT</div>
<div class="a" style="left:35px;top:724px;width:10px;height:1px;border-top:1px dotted #a05050"></div>
<svg style="left:45px;top:717px" width="16" height="17" viewBox="0 0 16 17">
<path d="M4 0.5h8l3 3v13H4z" fill="#d8eefa" stroke="#a8c8e0" stroke-width="0.7"/>
<rect x="7" y="12" width="6" height="1" fill="#8ab8e0"/>
<rect x="0.5" y="3" width="14" height="8" rx="1" fill="#b8141c"/>
<text x="1.6" y="9.6" font-family="Liberation Sans" font-weight="700" font-size="7" fill="#fff">PDF</text>
</svg>
<div class="m" style="left:66px;top:720px;color:#000;">A518_Main_SCH_V1.0</div>
<div class="a" style="left:35px;top:740px;width:10px;height:1px;border-top:1px dotted #a05050"></div>
<svg style="left:45px;top:733px" width="16" height="17" viewBox="0 0 16 17">
<path d="M4 0.5h8l3 3v13H4z" fill="#d8eefa" stroke="#a8c8e0" stroke-width="0.7"/>
<rect x="7" y="12" width="6" height="1" fill="#8ab8e0"/>
<rect x="0.5" y="3" width="14" height="8" rx="1" fill="#b8141c"/>
<text x="1.6" y="9.6" font-family="Liberation Sans" font-weight="700" font-size="7" fill="#fff">PDF</text>
</svg>
<div class="m" style="left:66px;top:736px;color:#000;">A518_Main_SCH_V1.1</div>
<div class="a" style="left:35px;top:756px;width:10px;height:1px;border-top:1px dotted #a05050"></div>
<svg style="left:45px;top:749px" width="16" height="17" viewBox="0 0 16 17">
<path d="M4 0.5h8l3 3v13H4z" fill="#d8eefa" stroke="#a8c8e0" stroke-width="0.7"/>
<rect x="7" y="12" width="6" height="1" fill="#8ab8e0"/>
<rect x="0.5" y="3" width="14" height="8" rx="1" fill="#b8141c"/>
<text x="1.6" y="9.6" font-family="Liberation Sans" font-weight="700" font-size="7" fill="#fff">PDF</text>
</svg>
<div class="m" style="left:66px;top:752px;color:#000;">A518_Main_SCH_V1.2</div>
<div class="a" style="left:35px;top:772px;width:10px;height:1px;border-top:1px dotted #a05050"></div>
<svg style="left:45px;top:765px" width="16" height="17" viewBox="0 0 16 17">
<path d="M4 0.5h8l3 3v13H4z" fill="#d8eefa" stroke="#a8c8e0" stroke-width="0.7"/>
<rect x="7" y="12" width="6" height="1" fill="#8ab8e0"/>
<rect x="0.5" y="3" width="14" height="8" rx="1" fill="#b8141c"/>
<text x="1.6" y="9.6" font-family="Liberation Sans" font-weight="700" font-size="7" fill="#fff">PDF</text>
</svg>
<div class="m" style="left:66px;top:768px;color:#000;">A518_Main_SCH_V1.3</div>
<div class="a" style="left:35px;top:788px;width:10px;height:1px;border-top:1px dotted #a05050"></div>
<svg style="left:45px;top:781px" width="16" height="17" viewBox="0 0 16 17">
<path d="M4 0.5h8l3 3v13H4z" fill="#d8eefa" stroke="#a8c8e0" stroke-width="0.7"/>
<rect x="7" y="12" width="6" height="1" fill="#8ab8e0"/>
<rect x="0.5" y="3" width="14" height="8" rx="1" fill="#b8141c"/>
<text x="1.6" y="9.6" font-family="Liberation Sans" font-weight="700" font-size="7" fill="#fff">PDF</text>
</svg>
<div class="m" style="left:66px;top:784px;color:#000;">A518_Main_SCH_V2.0</div>
<div class="a" style="left:35px;top:804px;width:10px;height:1px;border-top:1px dotted #a05050"></div>
<svg style="left:45px;top:797px" width="16" height="17" viewBox="0 0 16 17">
<path d="M4 0.5h8l3 3v13H4z" fill="#d8eefa" stroke="#a8c8e0" stroke-width="0.7"/>
<rect x="7" y="12" width="6" height="1" fill="#8ab8e0"/>
<rect x="0.5" y="3" width="14" height="8" rx="1" fill="#b8141c"/>
<text x="1.6" y="9.6" font-family="Liberation Sans" font-weight="700" font-size="7" fill="#fff">PDF</text>
</svg>
<div class="m" style="left:66px;top:800px;color:#000;">A518_Main_SCH_V2.1</div>
<div class="a" style="left:236px;top:141px;width:17px;height:674px;background:#fff;border:1px solid #b4b4b4"></div>
<div class="a" style="left:237px;top:157px;width:15px;height:1px;background:#c8c8c8"></div>
<svg style="left:240px;top:146px" width="9" height="6" viewBox="0 0 9 6"><path d="M0.8 5.2L4.5 1.5L8.2 5.2" stroke="#555" stroke-width="1.4" fill="none"/></svg>
<div class="a" style="left:237px;top:596px;width:15px;height:73px;background:#dadada;border-top:1px solid #c4c4c4;border-bottom:1px solid #c4c4c4"></div>
<svg style="left:240px;top:629px" width="8" height="6" viewBox="0 0 8 6"><path d="M0 0.5h8M0 2.5h8M0 4.5h8" stroke="#606060" stroke-width="1"/></svg>
<div class="a" style="left:237px;top:798px;width:15px;height:1px;background:#c8c8c8"></div>
<svg style="left:240px;top:803px" width="9" height="6" viewBox="0 0 9 6"><path d="M0.8 0.8L4.5 4.5L8.2 0.8" stroke="#555" stroke-width="1.4" fill="none"/></svg>
<div class="a" style="left:8px;top:815px;width:228px;height:17px;background:#fff;border:1px solid #b4b4b4"></div>
<div class="a" style="left:24px;top:816px;width:1px;height:15px;background:#c8c8c8"></div>
<svg style="left:13px;top:819px" width="6" height="9" viewBox="0 0 6 9"><path d="M5.2 0.8L1.5 4.5L5.2 8.2" stroke="#555" stroke-width="1.4" fill="none"/></svg>
<div class="a" style="left:55px;top:816px;width:164px;height:15px;background:#dadada;border-left:1px solid #c4c4c4;border-right:1px solid #c4c4c4"></div>
<svg style="left:134px;top:820px" width="6" height="8" viewBox="0 0 6 8"><path d="M0.5 0v8M2.5 0v8M4.5 0v8" stroke="#606060" stroke-width="1"/></svg>
<div class="a" style="left:219px;top:816px;width:1px;height:15px;background:#c8c8c8"></div>
<svg style="left:224px;top:819px" width="6" height="9" viewBox="0 0 6 9"><path d="M0.8 0.8L4.5 4.5L0.8 8.2" stroke="#555" stroke-width="1.4" fill="none"/></svg>
<div class="a" style="left:261px;top:134px;width:1260px;height:27px;background:linear-gradient(#f5f5f5,#eeeeee)"></div>
<div class="a" style="left:261px;top:134px;width:1px;height:27px;background:#a8a8a8"></div>
<svg style="left:268px;top:139px" width="18" height="17" viewBox="0 0 18 17">
<path d="M1 1h9v14H1z" fill="#e8c670" stroke="#c8a040" stroke-width="0.8"/>
<path d="M3 1v14" stroke="#f6e0a0" stroke-width="1"/>
<path d="M6.5 5.5h6l2 2v8h-8z" fill="#fff" stroke="#707070" stroke-width="0.8"/>
<path d="M8 9h5M8 11h5M8 13h5" stroke="#9ab" stroke-width="0.7"/>
</svg>
<svg style="left:291px;top:139px" width="19" height="18" viewBox="0 0 19 18">
<path d="M6.5 7.5h8.5l1.5 1.5v7.5h-10z" fill="#fff" stroke="#a0a0a0" stroke-width="0.8"/>
<path d="M1.5 1.5h8l1.5 1.5v7.5h-9.5z" fill="#c6def2" stroke="#5a7a98" stroke-width="1"/>
<path d="M12 2.5h3v3" stroke="#000" stroke-width="1.3" fill="none"/><path d="M13.2 5.5l1.8 1.6 1.8-1.6z" fill="#000"/>
</svg>
<svg style="left:315px;top:139px" width="19" height="18" viewBox="0 0 19 18">
<path d="M1.5 7.5h8.5l1.5 1.5v7.5h-10z" fill="#fff" stroke="#a0a0a0" stroke-width="0.8"/>
<path d="M7.5 1.5h8l1.5 1.5v7.5h-9.5z" fill="#c6def2" stroke="#5a7a98" stroke-width="1"/>
<path d="M6 2.5h-3v3" stroke="#000" stroke-width="1.3" fill="none"/><path d="M1.2 5.5l1.8 1.6 1.8-1.6z" fill="#000"/>
</svg>
<div class="a" style="left:336px;top:137px;width:1px;height:22px;background:#a0a0a0"></div>
<div class="a" style="left:346px;top:142px;font-size:12px;color:#111;white-space:pre;line-height:14px">Page:</div>
<div class="a" style="left:384px;top:138px;width:40px;height:19px;background:#fff;border-top:1px solid #aaa;border-left:1px solid #ccc"></div>
<div class="a" style="left:413px;top:142px;font-size:12px;color:#111;white-space:pre;line-height:14px">1</div>
<div class="a" style="left:428px;top:142px;font-size:12px;color:#111;white-space:pre;line-height:14px">/</div>
<div class="a" style="left:436px;top:142px;font-size:12px;color:#111;white-space:pre;line-height:14px">2</div>
<svg style="left:456px;top:140px" width="140" height="17" viewBox="0 0 140 17">
<path d="M1 8L12 0.2V15.8Z" fill="#9c9c9c"/>
<defs><linearGradient id="ny" x1="0" x2="1"><stop offset="0" stop-color="#f8d860"/><stop offset="1" stop-color="#d8a820"/></linearGradient>
<linearGradient id="bl" x1="0" x2="0" y1="0" y2="1"><stop offset="0" stop-color="#eaf4fc"/><stop offset="1" stop-color="#b8d6f0"/></linearGradient>
<radialGradient id="cb" cx="0.45" cy="0.4" r="0.6"><stop offset="0" stop-color="#e6f4ff"/><stop offset="1" stop-color="#8cc6ee"/></radialGradient></defs>
<path d="M28.5 0.5L38.5 8L28.5 15.5Z" fill="url(#ny)" stroke="#c09a30" stroke-width="0.8"/>
<rect x="50.5" y="0.5" width="11" height="15" fill="url(#bl)" stroke="#4f6f90" stroke-width="1"/>
<path d="M51.8 8l2.8-3v6zM60.2 8l-2.8-3v6z" fill="#3a5a7a"/>
<rect x="73.5" y="0.5" width="13" height="15" fill="url(#bl)" stroke="#4f6f90" stroke-width="1"/>
<path d="M80 3l-2 2h4zM80 13l-2-2h4zM75.5 8l2-2v4zM84.5 8l-2-2v4z" fill="#3a5a7a"/>
<circle cx="104" cy="8" r="7.3" fill="url(#cb)" stroke="#6a8aa8" stroke-width="1.2"/>
<rect x="100" y="7" width="8" height="2.2" fill="#1a4a80"/>
<circle cx="128" cy="8" r="7.3" fill="url(#cb)" stroke="#6a8aa8" stroke-width="1.2"/>
<rect x="124" y="7" width="8" height="2.2" fill="#1a4a80"/><rect x="126.9" y="4" width="2.2" height="8" fill="#1a4a80"/>
</svg>
<div class="a" style="left:596px;top:137px;width:1px;height:22px;background:#a0a0a0"></div>
<div class="a" style="left:606px;top:142px;font-size:12px;color:#111;white-space:pre;line-height:14px">Find:</div>
<div class="a" style="left:638px;top:138px;width:160px;height:19px;background:#fff;border-top:1px solid #aaa;border-left:1px solid #ccc"></div>
<svg style="left:804px;top:139px" width="70" height="18" viewBox="0 0 70 18">
<path d="M1 2h9v13H1z M10 8.5L16 1.5V16Z" fill="#9e9e9e"/>
<path d="M26 1.5V15.5L32 8.5Z M32 2h9v13h-9z" fill="#9e9e9e"/>
<text x="49" y="16" font-family="Liberation Sans" font-size="13" fill="#6a5ad8">A</text>
<text x="57" y="8" font-family="Liberation Sans" font-weight="700" font-size="9" fill="#b01870">a</text>
</svg>
<div class="a" style="left:261px;top:161px;width:1244px;height:673px;background:#999999"></div>
<div class="a" style="left:261px;top:161px;width:1244px;height:1px;background:#8a8a8a"></div>
<div class="a" style="left:646px;top:163px;width:475px;height:671px;background:#ffffff"></div>
<svg style="left:646px;top:163px" width="475" height="671" viewBox="646 163 475 671" font-family="Liberation Sans">
<path d="M795 250 V222 Q795 212 803.6 207 V193 Q803.6 190 807 190 H953 Q956 190 956 194 V205 Q958 214 966 214.6 H976.3 V722 Q976 738 961 740 V780" fill="none" stroke="#cfcfcf" stroke-width="0.9"/>
<path d="M795 250 Q795 252 790 252 Q784.4 252 784.4 258 V724 Q784.4 736 796 737 Q797.5 738 797.5 745 V752 Q798 759.7 806.8 759.7 H865.5 Q872 760 875 766" fill="none" stroke="#cfcfcf" stroke-width="0.9"/>
<circle cx="823.6" cy="197.8" r="4.2" fill="none" stroke="#cfcfcf" stroke-width="0.9"/>
<circle cx="911.5" cy="198.2" r="4.3" fill="none" stroke="#cfcfcf" stroke-width="0.9"/>
<circle cx="810.3" cy="213" r="3.2" fill="none" stroke="#cfcfcf" stroke-width="0.9"/>
<circle cx="928.9" cy="228" r="3" fill="none" stroke="#cfcfcf" stroke-width="0.9"/>
<circle cx="942.7" cy="244.2" r="3.2" fill="none" stroke="#cfcfcf" stroke-width="0.9"/>
<circle cx="919.7" cy="594.7" r="3.5" fill="none" stroke="#cfcfcf" stroke-width="0.9"/>
<circle cx="913.6" cy="678.5" r="3.5" fill="none" stroke="#cfcfcf" stroke-width="0.9"/>
<circle cx="834.9" cy="688.8" r="3.5" fill="none" stroke="#cfcfcf" stroke-width="0.9"/>
<circle cx="840.5" cy="718.6" r="3.5" fill="none" stroke="#cfcfcf" stroke-width="0.9"/>
<rect x="782.3" y="297" width="2.6" height="62" fill="#6e6e6e"/>
<rect x="782.3" y="581" width="2.6" height="66" fill="#6e6e6e"/>
<rect x="976.0" y="297" width="2.6" height="62" fill="#6e6e6e"/>
<rect x="976.0" y="581" width="2.6" height="66" fill="#6e6e6e"/>
<path d="M871.2 206.7 V186.6 A8.8 8.8 0 0 1 888.8 186.6 V206.7 Z" fill="none" stroke="#333" stroke-width="0.9"/>
<rect x="923.4" y="192.3" width="12.4" height="17.3" fill="#ffff00"/>
<text x="929.6" y="201.0" font-size="3.0" font-weight="700" fill="#111" stroke="#111" stroke-width="0.2" text-anchor="middle" transform="rotate(-90 929.6 201.0)">ANT103</text>
<rect x="940.2" y="192.3" width="11.9" height="17.3" fill="#ffff00"/>
<text x="946.2" y="201.0" font-size="3.0" font-weight="700" fill="#111" stroke="#111" stroke-width="0.2" text-anchor="middle" transform="rotate(-90 946.2 201.0)">ANT104</text>
<rect x="868.5" y="208.1" width="8.9" height="17.3" fill="#ffff00"/>
<text x="873.0" y="216.8" font-size="3.0" font-weight="700" fill="#111" stroke="#111" stroke-width="0.2" text-anchor="middle" transform="rotate(-90 873.0 216.8)">TP701</text>
<rect x="882.4" y="208.1" width="9.4" height="17.3" fill="#ffff00"/>
<text x="887.0" y="216.8" font-size="3.0" font-weight="700" fill="#111" stroke="#111" stroke-width="0.2" text-anchor="middle" transform="rotate(-90 887.0 216.8)">TP702</text>
<path d="M871.5 231.4h3M885.8 231.4h4M887.8 229.4v4" stroke="#111" stroke-width="0.8"/>
<circle cx="800.8" cy="219.2" r="5" fill="#ffff00"/>
<text x="793.8" y="220.6" font-size="2.8" font-weight="700" fill="#111" stroke="#111" stroke-width="0.2" text-anchor="start">MARK901</text>
<rect x="808.3" y="224.3" width="7.4" height="15.9" fill="#ffff00"/>
<rect x="808.6" y="228.5" width="6.8" height="9.0" fill="none" stroke="#e08080" stroke-width="0.6"/>
<rect x="816.2" y="225.7" width="9.3" height="16.3" fill="#ffff00"/>
<rect x="826.0" y="225.7" width="5.6" height="8.9" fill="#ffff00"/>
<text x="813.0" y="232.5" font-size="3.2" font-weight="700" fill="#111" stroke="#111" stroke-width="0.2" text-anchor="middle" transform="rotate(-90 813.0 232.5)">R301</text>
<text x="822.0" y="234.0" font-size="3.2" font-weight="700" fill="#111" stroke="#111" stroke-width="0.2" text-anchor="middle" transform="rotate(-90 822.0 234.0)">C303</text>
<text x="830.0" y="230.0" font-size="3.2" font-weight="700" fill="#111" stroke="#111" stroke-width="0.2" text-anchor="middle" transform="rotate(-90 830.0 230.0)">C304</text>
<text x="802.8" y="246.3" font-size="4.8" font-weight="400" fill="#111" stroke="#111" stroke-width="0.2" text-anchor="start">VBAT</text>
<text x="838.5" y="244.3" font-size="4.8" font-weight="400" fill="#111" stroke="#111" stroke-width="0.2" text-anchor="start">GND</text>
<text x="865.5" y="249.2" font-size="3.6" font-weight="700" fill="#111" stroke="#111" stroke-width="0.2" text-anchor="start">SH801</text>
<rect x="905.6" y="214.0" width="8.4" height="8.5" fill="#ffff00"/>
<text x="909.8" y="217.5" font-size="4.0" font-weight="700" fill="#000" stroke="#000" stroke-width="0.06" text-anchor="middle" textLength="7.7" lengthAdjust="spacingAndGlyphs">R982</text>
<text x="909.8" y="221.8" font-size="4.0" font-weight="700" fill="#000" stroke="#000" stroke-width="0.06" text-anchor="middle" textLength="7.7" lengthAdjust="spacingAndGlyphs">L979</text>
<rect x="914.5" y="221.5" width="9.5" height="8.9" fill="#ffff00"/>
<text x="919.2" y="225.1" font-size="4.0" font-weight="700" fill="#000" stroke="#000" stroke-width="0.06" text-anchor="middle" textLength="8.7" lengthAdjust="spacingAndGlyphs">C907</text>
<text x="919.2" y="229.6" font-size="4.0" font-weight="700" fill="#000" stroke="#000" stroke-width="0.06" text-anchor="middle" textLength="8.7" lengthAdjust="spacingAndGlyphs">L833</text>
<rect x="896.2" y="232.9" width="9.4" height="13.3" fill="#ffff00"/>
<text x="900.9" y="236.5" font-size="4.0" font-weight="700" fill="#000" stroke="#000" stroke-width="0.06" text-anchor="middle" textLength="8.6" lengthAdjust="spacingAndGlyphs">C788</text>
<text x="900.9" y="241.0" font-size="4.0" font-weight="700" fill="#000" stroke="#000" stroke-width="0.06" text-anchor="middle" textLength="8.6" lengthAdjust="spacingAndGlyphs">C623</text>
<text x="900.9" y="245.4" font-size="4.0" font-weight="700" fill="#000" stroke="#000" stroke-width="0.06" text-anchor="middle" textLength="8.6" lengthAdjust="spacingAndGlyphs">C286</text>
<rect x="908.0" y="233.4" width="16.0" height="10.8" fill="#ffff00"/>
<text x="916.0" y="240.5" font-size="3.0" font-weight="700" fill="#111" stroke="#111" stroke-width="0.2" text-anchor="middle">U401</text>
<path d="M910 233.5h12M910 244h12" stroke="#e81212" stroke-width="0.8"/>
<rect x="925.4" y="233.4" width="9.9" height="12.8" fill="#ffff00"/>
<text x="930.3" y="236.9" font-size="4.0" font-weight="700" fill="#000" stroke="#000" stroke-width="0.06" text-anchor="middle" textLength="9.1" lengthAdjust="spacingAndGlyphs">C012</text>
<text x="930.3" y="241.2" font-size="4.0" font-weight="700" fill="#000" stroke="#000" stroke-width="0.06" text-anchor="middle" textLength="9.1" lengthAdjust="spacingAndGlyphs">E904</text>
<text x="930.3" y="245.5" font-size="4.0" font-weight="700" fill="#000" stroke="#000" stroke-width="0.06" text-anchor="middle" textLength="9.1" lengthAdjust="spacingAndGlyphs">E047</text>
<rect x="935.8" y="215.6" width="9.4" height="22.7" fill="#ffff00"/>
<text x="940.5" y="219.3" font-size="4.0" font-weight="700" fill="#000" stroke="#000" stroke-width="0.06" text-anchor="middle" textLength="8.6" lengthAdjust="spacingAndGlyphs">R666</text>
<text x="940.5" y="223.8" font-size="4.0" font-weight="700" fill="#000" stroke="#000" stroke-width="0.06" text-anchor="middle" textLength="8.6" lengthAdjust="spacingAndGlyphs">C972</text>
<text x="940.5" y="228.4" font-size="4.0" font-weight="700" fill="#000" stroke="#000" stroke-width="0.06" text-anchor="middle" textLength="8.6" lengthAdjust="spacingAndGlyphs">L102</text>
<text x="940.5" y="232.9" font-size="4.0" font-weight="700" fill="#000" stroke="#000" stroke-width="0.06" text-anchor="middle" textLength="8.6" lengthAdjust="spacingAndGlyphs">C346</text>
<text x="940.5" y="237.4" font-size="4.0" font-weight="700" fill="#000" stroke="#000" stroke-width="0.06" text-anchor="middle" textLength="8.6" lengthAdjust="spacingAndGlyphs">E468</text>
<rect x="945.7" y="215.6" width="4.9" height="17.8" fill="#ffff00"/>
<text x="949.6" y="224.5" font-size="4.0" font-weight="700" fill="#000" stroke="#000" stroke-width="0.06" text-anchor="middle" textLength="12.0" lengthAdjust="spacingAndGlyphs" transform="rotate(-90 948.2 224.5)">E6958</text>
<rect x="950.6" y="228.0" width="8.9" height="7.3" fill="#ffff00"/>
<text x="955.0" y="231.2" font-size="3.8" font-weight="700" fill="#000" stroke="#000" stroke-width="0.06" text-anchor="middle" textLength="8.2" lengthAdjust="spacingAndGlyphs">R693</text>
<text x="955.0" y="234.8" font-size="3.8" font-weight="700" fill="#000" stroke="#000" stroke-width="0.06" text-anchor="middle" textLength="8.2" lengthAdjust="spacingAndGlyphs">L049</text>
<rect x="957.0" y="237.3" width="4.5" height="7.9" fill="#ffff00"/>
<text x="960.7" y="241.2" font-size="4.0" font-weight="700" fill="#000" stroke="#000" stroke-width="0.06" text-anchor="middle" textLength="7.1" lengthAdjust="spacingAndGlyphs" transform="rotate(-90 959.2 241.2)">C25</text>
<text x="954.5" y="220.0" font-size="3" font-weight="400" fill="#111" stroke="#111" stroke-width="0.2" text-anchor="middle" transform="rotate(90 954.5 220.0)">GSM</text>
<rect x="784.7" y="256.3" width="12.2" height="22.7" fill="#ffff00"/>
<text x="791.0" y="267.6" font-size="3.0" font-weight="700" fill="#111" stroke="#111" stroke-width="0.2" text-anchor="middle" transform="rotate(-90 791.0 267.6)">ANT101</text>
<rect x="803.9" y="247.0" width="10.4" height="11.6" fill="#ffff00"/>
<rect x="821.9" y="247.0" width="9.9" height="11.6" fill="#ffff00"/>
<rect x="838.8" y="247.0" width="9.3" height="11.6" fill="#ffff00"/>
<rect x="801.0" y="257.5" width="51.2" height="19.8" fill="none" stroke="#e81212" stroke-width="1.2"/>
<rect x="816.0" y="265.0" width="21.6" height="14.6" fill="#ffff00"/>
<text x="826.5" y="263.5" font-size="3.0" font-weight="700" fill="#111" stroke="#111" stroke-width="0.2" text-anchor="middle">J301</text>
<path d="M840 264.4L843.8 260.4L847.5 264.4Z" fill="none" stroke="#e81212" stroke-width="0.8"/>
<text x="801.0" y="284.5" font-size="4.6" font-weight="400" fill="#111" stroke="#111" stroke-width="0.2" text-anchor="start">FM</text>
<text x="830.5" y="286.5" font-size="4.6" font-weight="400" fill="#111" stroke="#111" stroke-width="0.2" text-anchor="start">AD</text>
<rect x="785.2" y="284.8" width="6.4" height="8.2" fill="#ffff00"/>
<text x="789.8" y="288.9" font-size="4.0" font-weight="700" fill="#000" stroke="#000" stroke-width="0.06" text-anchor="middle" textLength="7.4" lengthAdjust="spacingAndGlyphs" transform="rotate(-90 788.4 288.9)">R99</text>
<rect x="792.8" y="284.8" width="14.6" height="8.7" fill="#ffff00"/>
<text x="796.7" y="289.1" font-size="4.0" font-weight="700" fill="#000" stroke="#000" stroke-width="0.06" text-anchor="middle" textLength="7.8" lengthAdjust="spacingAndGlyphs" transform="rotate(-90 795.2 289.1)">C39</text>
<text x="801.5" y="289.1" font-size="4.0" font-weight="700" fill="#000" stroke="#000" stroke-width="0.06" text-anchor="middle" textLength="7.8" lengthAdjust="spacingAndGlyphs" transform="rotate(-90 800.1 289.1)">L41</text>
<text x="806.4" y="289.1" font-size="4.0" font-weight="700" fill="#000" stroke="#000" stroke-width="0.06" text-anchor="middle" textLength="7.8" lengthAdjust="spacingAndGlyphs" transform="rotate(-90 805.0 289.1)">C77</text>
<rect x="812.0" y="290.0" width="8.2" height="12.9" fill="#ffff00"/>
<text x="817.5" y="296.4" font-size="4.0" font-weight="700" fill="#000" stroke="#000" stroke-width="0.06" text-anchor="middle" textLength="11.6" lengthAdjust="spacingAndGlyphs" transform="rotate(-90 816.1 296.4)">C5162</text>
<rect x="811.5" y="307.6" width="9.5" height="3.4" fill="#ffff00"/>
<text x="816.2" y="310.5" font-size="3.6" font-weight="700" fill="#000" stroke="#000" stroke-width="0.06" text-anchor="middle" textLength="8.7" lengthAdjust="spacingAndGlyphs">C466</text>
<rect x="828.3" y="293.0" width="15.7" height="8.7" fill="#ffff00"/>
<text x="836.1" y="298.8" font-size="4.0" font-weight="700" fill="#000" stroke="#000" stroke-width="0.06" text-anchor="middle" textLength="12.0" lengthAdjust="spacingAndGlyphs">E109</text>
<rect x="828.3" y="303.4" width="15.7" height="8.2" fill="#ffff00"/>
<text x="836.1" y="308.9" font-size="4.0" font-weight="700" fill="#000" stroke="#000" stroke-width="0.06" text-anchor="middle" textLength="12.0" lengthAdjust="spacingAndGlyphs">R069</text>
<rect x="845.8" y="293.5" width="4.6" height="28.0" fill="#ffff00"/>
<text x="849.5" y="307.5" font-size="4.0" font-weight="700" fill="#000" stroke="#000" stroke-width="0.06" text-anchor="middle" textLength="12.0" lengthAdjust="spacingAndGlyphs" transform="rotate(-90 848.1 307.5)">L8483</text>
<rect x="824.5" y="313.5" width="10.0" height="8.0" fill="#ffff00"/>
<text x="829.5" y="316.9" font-size="4.0" font-weight="700" fill="#000" stroke="#000" stroke-width="0.06" text-anchor="middle" textLength="9.2" lengthAdjust="spacingAndGlyphs">C401</text>
<text x="829.5" y="320.9" font-size="4.0" font-weight="700" fill="#000" stroke="#000" stroke-width="0.06" text-anchor="middle" textLength="9.2" lengthAdjust="spacingAndGlyphs">C980</text>
<rect x="838.0" y="313.5" width="7.0" height="8.0" fill="#ffff00"/>
<text x="841.0" y="317.5" font-size="3.5" font-weight="700" fill="#000" stroke="#000" stroke-width="0.06" text-anchor="middle" textLength="7.2" lengthAdjust="spacingAndGlyphs" transform="rotate(-90 839.8 317.5)">R64</text>
<text x="844.5" y="317.5" font-size="3.5" font-weight="700" fill="#000" stroke="#000" stroke-width="0.06" text-anchor="middle" textLength="7.2" lengthAdjust="spacingAndGlyphs" transform="rotate(-90 843.2 317.5)">R42</text>
<rect x="792.8" y="297.0" width="14.6" height="4.0" fill="#ffff00"/>
<rect x="792.8" y="311.6" width="14.6" height="4.7" fill="#ffff00"/>
<rect x="791.6" y="301.0" width="16.9" height="10.6" fill="none" stroke="#e81212" stroke-width="0.8"/>
<text x="800.0" y="307.5" font-size="3.0" font-weight="700" fill="#111" stroke="#111" stroke-width="0.2" text-anchor="middle">U303</text>
<rect x="792.2" y="322.0" width="9.3" height="6.5" fill="#ffff00"/>
<text x="796.9" y="326.6" font-size="4.0" font-weight="700" fill="#000" stroke="#000" stroke-width="0.06" text-anchor="middle" textLength="8.6" lengthAdjust="spacingAndGlyphs">C055</text>
<rect x="803.0" y="318.0" width="5.0" height="9.0" fill="#ffff00"/>
<text x="806.9" y="322.5" font-size="4.0" font-weight="700" fill="#000" stroke="#000" stroke-width="0.06" text-anchor="middle" textLength="8.1" lengthAdjust="spacingAndGlyphs" transform="rotate(-90 805.5 322.5)">L26</text>
<rect x="809.0" y="318.0" width="8.0" height="11.0" fill="#ffff00"/>
<text x="813.0" y="322.1" font-size="4.0" font-weight="700" fill="#000" stroke="#000" stroke-width="0.06" text-anchor="middle" textLength="7.4" lengthAdjust="spacingAndGlyphs">C786</text>
<text x="813.0" y="327.6" font-size="4.0" font-weight="700" fill="#000" stroke="#000" stroke-width="0.06" text-anchor="middle" textLength="7.4" lengthAdjust="spacingAndGlyphs">C981</text>
<path d="M855.4 252.5 H973.1 V412 H876.4 V330.8 H855.4 Z" fill="none" stroke="#e81212" stroke-width="1.2"/>
<circle cx="855.2" cy="252.3" r="1.8" fill="none" stroke="#e81212" stroke-width="1.2"/>
<rect x="863.0" y="250.2" width="17.0" height="4.6" fill="#ffff00"/>
<rect x="887.8" y="250.2" width="14.8" height="4.6" fill="#ffff00"/>
<rect x="910.0" y="250.2" width="14.4" height="4.6" fill="#ffff00"/>
<rect x="932.3" y="250.2" width="15.3" height="4.6" fill="#ffff00"/>
<rect x="955.6" y="250.2" width="14.4" height="4.6" fill="#ffff00"/>
<rect x="852.8" y="261.5" width="4.8" height="14.5" fill="#ffff00"/>
<rect x="852.8" y="284.2" width="4.8" height="14.0" fill="#ffff00"/>
<rect x="852.8" y="307.5" width="4.8" height="14.0" fill="#ffff00"/>
<rect x="862.0" y="329.0" width="13.5" height="4.0" fill="#ffff00"/>
<rect x="970.6" y="256.3" width="5.1" height="11.0" fill="#ffff00"/>
<rect x="970.6" y="279.4" width="5.1" height="13.6" fill="#ffff00"/>
<rect x="970.6" y="302.4" width="5.1" height="12.6" fill="#ffff00"/>
<rect x="970.6" y="325.0" width="5.1" height="15.0" fill="#ffff00"/>
<rect x="970.6" y="348.0" width="5.1" height="14.5" fill="#ffff00"/>
<rect x="970.6" y="370.0" width="5.1" height="16.0" fill="#ffff00"/>
<rect x="970.6" y="392.7" width="5.1" height="16.3" fill="#ffff00"/>
<rect x="874.0" y="335.9" width="4.8" height="14.1" fill="#ffff00"/>
<rect x="874.0" y="359.6" width="4.8" height="12.8" fill="#ffff00"/>
<rect x="874.0" y="391.6" width="4.8" height="13.4" fill="#ffff00"/>
<rect x="874.7" y="410.5" width="14.7" height="5.0" fill="#ffff00"/>
<rect x="896.5" y="410.5" width="15.4" height="5.0" fill="#ffff00"/>
<rect x="922.1" y="410.5" width="15.4" height="5.0" fill="#ffff00"/>
<rect x="960.0" y="410.5" width="14.7" height="5.0" fill="#ffff00"/>
<rect x="859.2" y="257.5" width="11.5" height="4.3" fill="#ffff00"/>
<text x="865.0" y="261.0" font-size="4.0" font-weight="700" fill="#000" stroke="#000" stroke-width="0.06" text-anchor="middle" textLength="10.6" lengthAdjust="spacingAndGlyphs">R846</text>
<rect x="876.0" y="257.5" width="11.5" height="4.3" fill="#ffff00"/>
<text x="881.8" y="261.0" font-size="4.0" font-weight="700" fill="#000" stroke="#000" stroke-width="0.06" text-anchor="middle" textLength="10.6" lengthAdjust="spacingAndGlyphs">C346</text>
<rect x="860.8" y="263.3" width="9.4" height="4.2" fill="#ffff00"/>
<text x="865.5" y="266.8" font-size="4.0" font-weight="700" fill="#000" stroke="#000" stroke-width="0.06" text-anchor="middle" textLength="8.6" lengthAdjust="spacingAndGlyphs">L848</text>
<rect x="876.0" y="263.3" width="10.0" height="4.2" fill="#ffff00"/>
<text x="881.0" y="266.8" font-size="4.0" font-weight="700" fill="#000" stroke="#000" stroke-width="0.06" text-anchor="middle" textLength="9.2" lengthAdjust="spacingAndGlyphs">L069</text>
<rect x="888.0" y="256.0" width="19.4" height="11.5" fill="#ffff00"/>
<text x="891.3" y="261.8" font-size="3.9" font-weight="700" fill="#000" stroke="#000" stroke-width="0.06" text-anchor="middle" textLength="10.3" lengthAdjust="spacingAndGlyphs" transform="rotate(-90 889.9 261.8)">L069</text>
<text x="895.2" y="261.8" font-size="3.9" font-weight="700" fill="#000" stroke="#000" stroke-width="0.06" text-anchor="middle" textLength="10.3" lengthAdjust="spacingAndGlyphs" transform="rotate(-90 893.8 261.8)">R205</text>
<text x="899.1" y="261.8" font-size="3.9" font-weight="700" fill="#000" stroke="#000" stroke-width="0.06" text-anchor="middle" textLength="10.3" lengthAdjust="spacingAndGlyphs" transform="rotate(-90 897.7 261.8)">C559</text>
<text x="903.0" y="261.8" font-size="3.9" font-weight="700" fill="#000" stroke="#000" stroke-width="0.06" text-anchor="middle" textLength="10.3" lengthAdjust="spacingAndGlyphs" transform="rotate(-90 901.6 261.8)">C470</text>
<text x="906.9" y="261.8" font-size="3.9" font-weight="700" fill="#000" stroke="#000" stroke-width="0.06" text-anchor="middle" textLength="10.3" lengthAdjust="spacingAndGlyphs" transform="rotate(-90 905.5 261.8)">R005</text>
<rect x="910.5" y="256.0" width="8.5" height="4.7" fill="#ffff00"/>
<text x="914.8" y="259.8" font-size="4.0" font-weight="700" fill="#000" stroke="#000" stroke-width="0.06" text-anchor="middle" textLength="7.8" lengthAdjust="spacingAndGlyphs">L749</text>
<rect x="919.4" y="256.0" width="9.9" height="9.0" fill="#ffff00"/>
<text x="923.3" y="260.5" font-size="4.0" font-weight="700" fill="#000" stroke="#000" stroke-width="0.06" text-anchor="middle" textLength="8.1" lengthAdjust="spacingAndGlyphs" transform="rotate(-90 921.9 260.5)">R52</text>
<text x="928.3" y="260.5" font-size="4.0" font-weight="700" fill="#000" stroke="#000" stroke-width="0.06" text-anchor="middle" textLength="8.1" lengthAdjust="spacingAndGlyphs" transform="rotate(-90 926.8 260.5)">L25</text>
<rect x="859.7" y="269.6" width="29.9" height="3.7" fill="#ffff00"/>
<text x="874.7" y="272.8" font-size="3.9" font-weight="700" fill="#000" stroke="#000" stroke-width="0.06" text-anchor="middle" textLength="11.7" lengthAdjust="spacingAndGlyphs">E594</text>
<rect x="890.6" y="269.6" width="8.4" height="8.4" fill="#ffff00"/>
<text x="894.1" y="273.8" font-size="4.0" font-weight="700" fill="#000" stroke="#000" stroke-width="0.06" text-anchor="middle" textLength="7.6" lengthAdjust="spacingAndGlyphs" transform="rotate(-90 892.7 273.8)">L61</text>
<text x="898.3" y="273.8" font-size="4.0" font-weight="700" fill="#000" stroke="#000" stroke-width="0.06" text-anchor="middle" textLength="7.6" lengthAdjust="spacingAndGlyphs" transform="rotate(-90 896.9 273.8)">E09</text>
<rect x="861.8" y="276.4" width="3.7" height="8.9" fill="#ffff00"/>
<text x="865.0" y="280.9" font-size="3.7" font-weight="700" fill="#000" stroke="#000" stroke-width="0.06" text-anchor="middle" textLength="8.0" lengthAdjust="spacingAndGlyphs" transform="rotate(-90 863.6 280.9)">C24</text>
<rect x="906.8" y="270.0" width="8.9" height="8.5" fill="#ffff00"/>
<text x="910.5" y="274.2" font-size="4.0" font-weight="700" fill="#000" stroke="#000" stroke-width="0.06" text-anchor="middle" textLength="7.7" lengthAdjust="spacingAndGlyphs" transform="rotate(-90 909.0 274.2)">R34</text>
<text x="914.9" y="274.2" font-size="4.0" font-weight="700" fill="#000" stroke="#000" stroke-width="0.06" text-anchor="middle" textLength="7.7" lengthAdjust="spacingAndGlyphs" transform="rotate(-90 913.5 274.2)">R52</text>
<rect x="902.0" y="280.0" width="18.0" height="3.7" fill="#ffff00"/>
<text x="911.0" y="283.2" font-size="3.9" font-weight="700" fill="#000" stroke="#000" stroke-width="0.06" text-anchor="middle" textLength="11.7" lengthAdjust="spacingAndGlyphs">C611</text>
<rect x="872.3" y="283.7" width="18.8" height="3.2" fill="#ffff00"/>
<text x="881.7" y="286.5" font-size="3.4" font-weight="700" fill="#000" stroke="#000" stroke-width="0.06" text-anchor="middle" textLength="10.1" lengthAdjust="spacingAndGlyphs">R553</text>
<rect x="873.3" y="289.0" width="11.0" height="6.3" fill="#ffff00"/>
<text x="878.8" y="293.5" font-size="4.0" font-weight="700" fill="#000" stroke="#000" stroke-width="0.06" text-anchor="middle" textLength="10.1" lengthAdjust="spacingAndGlyphs">C215</text>
<rect x="884.8" y="288.0" width="5.8" height="8.8" fill="#ffff00"/>
<text x="889.1" y="292.4" font-size="4.0" font-weight="700" fill="#000" stroke="#000" stroke-width="0.06" text-anchor="middle" textLength="7.9" lengthAdjust="spacingAndGlyphs" transform="rotate(-90 887.7 292.4)">C39</text>
<rect x="872.3" y="298.4" width="9.9" height="3.1" fill="#ffff00"/>
<text x="877.2" y="301.1" font-size="3.3" font-weight="700" fill="#000" stroke="#000" stroke-width="0.06" text-anchor="middle" textLength="9.1" lengthAdjust="spacingAndGlyphs">C431</text>
<rect x="883.3" y="298.4" width="8.3" height="3.1" fill="#ffff00"/>
<text x="887.5" y="301.1" font-size="3.3" font-weight="700" fill="#000" stroke="#000" stroke-width="0.06" text-anchor="middle" textLength="7.6" lengthAdjust="spacingAndGlyphs">C835</text>
<rect x="861.8" y="303.0" width="8.9" height="3.8" fill="#ffff00"/>
<text x="866.2" y="306.3" font-size="4.0" font-weight="700" fill="#000" stroke="#000" stroke-width="0.06" text-anchor="middle" textLength="8.2" lengthAdjust="spacingAndGlyphs">E924</text>
<rect x="872.8" y="303.0" width="9.4" height="3.8" fill="#ffff00"/>
<text x="877.5" y="306.3" font-size="4.0" font-weight="700" fill="#000" stroke="#000" stroke-width="0.06" text-anchor="middle" textLength="8.6" lengthAdjust="spacingAndGlyphs">L195</text>
<rect x="883.0" y="302.5" width="9.0" height="4.3" fill="#ffff00"/>
<text x="886.7" y="304.6" font-size="4.0" font-weight="700" fill="#000" stroke="#000" stroke-width="0.06" text-anchor="middle" textLength="3.9" lengthAdjust="spacingAndGlyphs" transform="rotate(-90 885.2 304.6)">R26</text>
<text x="891.2" y="304.6" font-size="4.0" font-weight="700" fill="#000" stroke="#000" stroke-width="0.06" text-anchor="middle" textLength="3.9" lengthAdjust="spacingAndGlyphs" transform="rotate(-90 889.8 304.6)">L84</text>
<rect x="861.8" y="307.3" width="19.9" height="4.2" fill="#ffff00"/>
<text x="871.8" y="310.8" font-size="4.0" font-weight="700" fill="#000" stroke="#000" stroke-width="0.06" text-anchor="middle" textLength="12.0" lengthAdjust="spacingAndGlyphs">C564</text>
<rect x="882.2" y="307.3" width="10.5" height="4.7" fill="#ffff00"/>
<text x="886.3" y="309.6" font-size="4.0" font-weight="700" fill="#000" stroke="#000" stroke-width="0.06" text-anchor="middle" textLength="4.2" lengthAdjust="spacingAndGlyphs" transform="rotate(-90 884.8 309.6)">C96</text>
<text x="891.5" y="309.6" font-size="4.0" font-weight="700" fill="#000" stroke="#000" stroke-width="0.06" text-anchor="middle" textLength="4.2" lengthAdjust="spacingAndGlyphs" transform="rotate(-90 890.1 309.6)">C62</text>
<rect x="861.8" y="313.0" width="30.9" height="10.0" fill="#ffff00"/>
<text x="865.8" y="318.0" font-size="4.0" font-weight="700" fill="#000" stroke="#000" stroke-width="0.06" text-anchor="middle" textLength="9.0" lengthAdjust="spacingAndGlyphs" transform="rotate(-90 864.4 318.0)">R079</text>
<text x="871.0" y="318.0" font-size="4.0" font-weight="700" fill="#000" stroke="#000" stroke-width="0.06" text-anchor="middle" textLength="9.0" lengthAdjust="spacingAndGlyphs" transform="rotate(-90 869.5 318.0)">R683</text>
<text x="876.1" y="318.0" font-size="4.0" font-weight="700" fill="#000" stroke="#000" stroke-width="0.06" text-anchor="middle" textLength="9.0" lengthAdjust="spacingAndGlyphs" transform="rotate(-90 874.7 318.0)">C784</text>
<text x="881.3" y="318.0" font-size="4.0" font-weight="700" fill="#000" stroke="#000" stroke-width="0.06" text-anchor="middle" textLength="9.0" lengthAdjust="spacingAndGlyphs" transform="rotate(-90 879.8 318.0)">R531</text>
<text x="886.4" y="318.0" font-size="4.0" font-weight="700" fill="#000" stroke="#000" stroke-width="0.06" text-anchor="middle" textLength="9.0" lengthAdjust="spacingAndGlyphs" transform="rotate(-90 885.0 318.0)">E941</text>
<text x="891.6" y="318.0" font-size="4.0" font-weight="700" fill="#000" stroke="#000" stroke-width="0.06" text-anchor="middle" textLength="9.0" lengthAdjust="spacingAndGlyphs" transform="rotate(-90 890.1 318.0)">E300</text>
<rect x="894.8" y="322.5" width="4.2" height="9.5" fill="#ffff00"/>
<text x="898.3" y="327.2" font-size="4.0" font-weight="700" fill="#000" stroke="#000" stroke-width="0.06" text-anchor="middle" textLength="8.6" lengthAdjust="spacingAndGlyphs" transform="rotate(-90 896.9 327.2)">E83</text>
<rect x="904.2" y="306.3" width="10.5" height="4.1" fill="#ffff00"/>
<text x="909.5" y="309.8" font-size="4.0" font-weight="700" fill="#000" stroke="#000" stroke-width="0.06" text-anchor="middle" textLength="9.7" lengthAdjust="spacingAndGlyphs">C900</text>
<rect x="903.7" y="312.0" width="19.3" height="20.0" fill="#ffff00"/>
<text x="907.6" y="322.0" font-size="4.0" font-weight="700" fill="#000" stroke="#000" stroke-width="0.06" text-anchor="middle" textLength="12.0" lengthAdjust="spacingAndGlyphs" transform="rotate(-90 906.1 322.0)">C1284</text>
<text x="912.4" y="322.0" font-size="4.0" font-weight="700" fill="#000" stroke="#000" stroke-width="0.06" text-anchor="middle" textLength="12.0" lengthAdjust="spacingAndGlyphs" transform="rotate(-90 910.9 322.0)">R0886</text>
<text x="917.2" y="322.0" font-size="4.0" font-weight="700" fill="#000" stroke="#000" stroke-width="0.06" text-anchor="middle" textLength="12.0" lengthAdjust="spacingAndGlyphs" transform="rotate(-90 915.8 322.0)">C9152</text>
<text x="922.0" y="322.0" font-size="4.0" font-weight="700" fill="#000" stroke="#000" stroke-width="0.06" text-anchor="middle" textLength="12.0" lengthAdjust="spacingAndGlyphs" transform="rotate(-90 920.6 322.0)">L8705</text>
<rect x="934.8" y="256.3" width="18.9" height="8.4" fill="#ffff00"/>
<text x="939.4" y="260.5" font-size="4.0" font-weight="700" fill="#000" stroke="#000" stroke-width="0.06" text-anchor="middle" textLength="7.6" lengthAdjust="spacingAndGlyphs" transform="rotate(-90 937.9 260.5)">R31</text>
<text x="945.7" y="260.5" font-size="4.0" font-weight="700" fill="#000" stroke="#000" stroke-width="0.06" text-anchor="middle" textLength="7.6" lengthAdjust="spacingAndGlyphs" transform="rotate(-90 944.2 260.5)">R12</text>
<text x="952.0" y="260.5" font-size="4.0" font-weight="700" fill="#000" stroke="#000" stroke-width="0.06" text-anchor="middle" textLength="7.6" lengthAdjust="spacingAndGlyphs" transform="rotate(-90 950.5 260.5)">R42</text>
<rect x="902.6" y="286.4" width="16.3" height="11.0" fill="#ffff00"/>
<text x="910.7" y="293.0" font-size="3.0" font-weight="700" fill="#111" stroke="#111" stroke-width="0.2" text-anchor="middle">U901</text>
<path d="M900.5 291.9l2.2-2.5v5z" fill="#ffff00"/><circle cx="918.5" cy="286.5" r="0.8" fill="#e81212"/>
<rect x="923.3" y="266.8" width="32.5" height="31.4" fill="#ffff00"/>
<path d="M921.7 265.7H956.3V299.3H921.7Z" fill="none" stroke="#e81212" stroke-width="0.7" opacity="0.6"/>
<rect x="925" y="268.5" width="3" height="2.5" fill="#fff"/><rect x="951" y="268.5" width="3" height="2.5" fill="#fff"/><rect x="925" y="292" width="2.5" height="3" fill="#fff"/>
<text x="939.5" y="284.0" font-size="2.8" font-weight="700" fill="#111" stroke="#111" stroke-width="0.2" text-anchor="middle">U802</text>
<rect x="958.4" y="257.3" width="10.0" height="23.1" fill="#ffff00"/>
<text x="963.4" y="269.0" font-size="2.6" font-weight="700" fill="#111" stroke="#111" stroke-width="0.2" text-anchor="middle" transform="rotate(-90 963.4 269.0)">C805</text>
<path d="M957.8 260v17M969 260v17" stroke="#e81212" stroke-width="0.6" stroke-dasharray="2 1.5"/>
<rect x="958.4" y="282.5" width="9.5" height="36.7" fill="#ffff00"/>
<text x="963.1" y="286.2" font-size="4.0" font-weight="700" fill="#000" stroke="#000" stroke-width="0.06" text-anchor="middle" textLength="8.7" lengthAdjust="spacingAndGlyphs">E079</text>
<text x="963.1" y="290.8" font-size="4.0" font-weight="700" fill="#000" stroke="#000" stroke-width="0.06" text-anchor="middle" textLength="8.7" lengthAdjust="spacingAndGlyphs">E604</text>
<text x="963.1" y="295.4" font-size="4.0" font-weight="700" fill="#000" stroke="#000" stroke-width="0.06" text-anchor="middle" textLength="8.7" lengthAdjust="spacingAndGlyphs">R498</text>
<text x="963.1" y="300.0" font-size="4.0" font-weight="700" fill="#000" stroke="#000" stroke-width="0.06" text-anchor="middle" textLength="8.7" lengthAdjust="spacingAndGlyphs">R607</text>
<text x="963.1" y="304.5" font-size="4.0" font-weight="700" fill="#000" stroke="#000" stroke-width="0.06" text-anchor="middle" textLength="8.7" lengthAdjust="spacingAndGlyphs">L002</text>
<text x="963.1" y="309.1" font-size="4.0" font-weight="700" fill="#000" stroke="#000" stroke-width="0.06" text-anchor="middle" textLength="8.7" lengthAdjust="spacingAndGlyphs">C101</text>
<text x="963.1" y="313.7" font-size="4.0" font-weight="700" fill="#000" stroke="#000" stroke-width="0.06" text-anchor="middle" textLength="8.7" lengthAdjust="spacingAndGlyphs">C018</text>
<text x="963.1" y="318.3" font-size="4.0" font-weight="700" fill="#000" stroke="#000" stroke-width="0.06" text-anchor="middle" textLength="8.7" lengthAdjust="spacingAndGlyphs">R752</text>
<rect x="928.5" y="300.3" width="29.4" height="8.4" fill="#ffff00"/>
<text x="932.4" y="304.5" font-size="4.0" font-weight="700" fill="#000" stroke="#000" stroke-width="0.06" text-anchor="middle" textLength="7.6" lengthAdjust="spacingAndGlyphs" transform="rotate(-90 931.0 304.5)">L15</text>
<text x="937.3" y="304.5" font-size="4.0" font-weight="700" fill="#000" stroke="#000" stroke-width="0.06" text-anchor="middle" textLength="7.6" lengthAdjust="spacingAndGlyphs" transform="rotate(-90 935.9 304.5)">C69</text>
<text x="942.2" y="304.5" font-size="4.0" font-weight="700" fill="#000" stroke="#000" stroke-width="0.06" text-anchor="middle" textLength="7.6" lengthAdjust="spacingAndGlyphs" transform="rotate(-90 940.8 304.5)">L54</text>
<text x="947.1" y="304.5" font-size="4.0" font-weight="700" fill="#000" stroke="#000" stroke-width="0.06" text-anchor="middle" textLength="7.6" lengthAdjust="spacingAndGlyphs" transform="rotate(-90 945.7 304.5)">R56</text>
<text x="952.0" y="304.5" font-size="4.0" font-weight="700" fill="#000" stroke="#000" stroke-width="0.06" text-anchor="middle" textLength="7.6" lengthAdjust="spacingAndGlyphs" transform="rotate(-90 950.6 304.5)">C28</text>
<text x="956.9" y="304.5" font-size="4.0" font-weight="700" fill="#000" stroke="#000" stroke-width="0.06" text-anchor="middle" textLength="7.6" lengthAdjust="spacingAndGlyphs" transform="rotate(-90 955.5 304.5)">C61</text>
<rect x="926.4" y="314.0" width="18.9" height="3.5" fill="#ffff00"/>
<text x="935.8" y="317.0" font-size="3.7" font-weight="700" fill="#000" stroke="#000" stroke-width="0.06" text-anchor="middle" textLength="11.0" lengthAdjust="spacingAndGlyphs">R205</text>
<rect x="926.4" y="318.0" width="18.9" height="10.0" fill="#ffff00"/>
<text x="930.2" y="323.0" font-size="4.0" font-weight="700" fill="#000" stroke="#000" stroke-width="0.06" text-anchor="middle" textLength="9.0" lengthAdjust="spacingAndGlyphs" transform="rotate(-90 928.8 323.0)">C986</text>
<text x="934.9" y="323.0" font-size="4.0" font-weight="700" fill="#000" stroke="#000" stroke-width="0.06" text-anchor="middle" textLength="9.0" lengthAdjust="spacingAndGlyphs" transform="rotate(-90 933.5 323.0)">C096</text>
<text x="939.7" y="323.0" font-size="4.0" font-weight="700" fill="#000" stroke="#000" stroke-width="0.06" text-anchor="middle" textLength="9.0" lengthAdjust="spacingAndGlyphs" transform="rotate(-90 938.2 323.0)">C575</text>
<text x="944.4" y="323.0" font-size="4.0" font-weight="700" fill="#000" stroke="#000" stroke-width="0.06" text-anchor="middle" textLength="9.0" lengthAdjust="spacingAndGlyphs" transform="rotate(-90 942.9 323.0)">C670</text>
<rect x="926.4" y="328.3" width="18.9" height="3.5" fill="#ffff00"/>
<text x="935.8" y="331.3" font-size="3.7" font-weight="700" fill="#000" stroke="#000" stroke-width="0.06" text-anchor="middle" textLength="11.0" lengthAdjust="spacingAndGlyphs">R384</text>
<rect x="946.9" y="311.8" width="9.9" height="8.4" fill="#ffff00"/>
<text x="951.8" y="315.3" font-size="4.0" font-weight="700" fill="#000" stroke="#000" stroke-width="0.06" text-anchor="middle" textLength="9.1" lengthAdjust="spacingAndGlyphs">C916</text>
<text x="951.8" y="319.5" font-size="4.0" font-weight="700" fill="#000" stroke="#000" stroke-width="0.06" text-anchor="middle" textLength="9.1" lengthAdjust="spacingAndGlyphs">R620</text>
<rect x="950.0" y="322.3" width="17.3" height="11.6" fill="#ffff00"/>
<text x="958.6" y="329.5" font-size="3.0" font-weight="700" fill="#111" stroke="#111" stroke-width="0.2" text-anchor="middle">X101</text>
<rect x="950.0" y="335.6" width="7.0" height="8.2" fill="#ffff00"/>
<rect x="959.5" y="335.6" width="7.1" height="8.2" fill="#ffff00"/>
<circle cx="957.5" cy="334" r="1.1" fill="none" stroke="#e81212" stroke-width="0.7"/><circle cx="968" cy="338.5" r="1.1" fill="none" stroke="#e81212" stroke-width="0.7"/>
<path d="M953.5 345.5H950V340" fill="none" stroke="#e81212" stroke-width="1.2"/>
<path d="M784.8 338H870.4V416.5H860.6V407.4H831.3V353.6H860.6V338M784.8 338V416.5H860.6" fill="none" stroke="#e81212" stroke-width="1.2"/>
<rect x="800.0" y="334.0" width="11.7" height="9.8" fill="#ffff00"/>
<rect x="800.0" y="411.5" width="11.7" height="8.9" fill="#ffff00"/>
<rect x="846.7" y="334.0" width="12.3" height="9.8" fill="#ffff00"/>
<rect x="846.7" y="411.5" width="12.3" height="8.9" fill="#ffff00"/>
<rect x="832.9" y="356.8" width="9.8" height="4.2" fill="#ffff00"/>
<rect x="832.9" y="361.7" width="9.8" height="4.2" fill="#ffff00"/>
<rect x="832.9" y="366.6" width="9.8" height="4.2" fill="#ffff00"/>
<rect x="832.9" y="371.5" width="9.8" height="4.2" fill="#ffff00"/>
<rect x="832.9" y="376.4" width="9.8" height="4.2" fill="#ffff00"/>
<rect x="832.9" y="381.3" width="9.8" height="4.2" fill="#ffff00"/>
<rect x="832.9" y="386.2" width="9.8" height="4.2" fill="#ffff00"/>
<rect x="832.9" y="391.1" width="9.8" height="4.2" fill="#ffff00"/>
<rect x="832.9" y="396.0" width="9.8" height="4.2" fill="#ffff00"/>
<rect x="832.9" y="400.9" width="9.8" height="4.2" fill="#ffff00"/>
<rect x="848.0" y="357.0" width="9.5" height="46.0" fill="#ffff00"/>
<text x="852.8" y="361.0" font-size="4.0" font-weight="700" fill="#000" stroke="#000" stroke-width="0.06" text-anchor="middle" textLength="8.7" lengthAdjust="spacingAndGlyphs">L584</text>
<text x="852.8" y="366.1" font-size="4.0" font-weight="700" fill="#000" stroke="#000" stroke-width="0.06" text-anchor="middle" textLength="8.7" lengthAdjust="spacingAndGlyphs">C718</text>
<text x="852.8" y="371.2" font-size="4.0" font-weight="700" fill="#000" stroke="#000" stroke-width="0.06" text-anchor="middle" textLength="8.7" lengthAdjust="spacingAndGlyphs">E615</text>
<text x="852.8" y="376.3" font-size="4.0" font-weight="700" fill="#000" stroke="#000" stroke-width="0.06" text-anchor="middle" textLength="8.7" lengthAdjust="spacingAndGlyphs">R819</text>
<text x="852.8" y="381.4" font-size="4.0" font-weight="700" fill="#000" stroke="#000" stroke-width="0.06" text-anchor="middle" textLength="8.7" lengthAdjust="spacingAndGlyphs">C072</text>
<text x="852.8" y="386.5" font-size="4.0" font-weight="700" fill="#000" stroke="#000" stroke-width="0.06" text-anchor="middle" textLength="8.7" lengthAdjust="spacingAndGlyphs">R608</text>
<text x="852.8" y="391.6" font-size="4.0" font-weight="700" fill="#000" stroke="#000" stroke-width="0.06" text-anchor="middle" textLength="8.7" lengthAdjust="spacingAndGlyphs">C916</text>
<text x="852.8" y="396.7" font-size="4.0" font-weight="700" fill="#000" stroke="#000" stroke-width="0.06" text-anchor="middle" textLength="8.7" lengthAdjust="spacingAndGlyphs">R051</text>
<text x="852.8" y="401.8" font-size="4.0" font-weight="700" fill="#000" stroke="#000" stroke-width="0.06" text-anchor="middle" textLength="8.7" lengthAdjust="spacingAndGlyphs">C174</text>
<rect x="858.0" y="365.0" width="4.0" height="28.0" fill="#ffff00"/>
<text x="861.4" y="379.0" font-size="4.0" font-weight="700" fill="#000" stroke="#000" stroke-width="0.06" text-anchor="middle" textLength="12.0" lengthAdjust="spacingAndGlyphs" transform="rotate(-90 860.0 379.0)">R4109</text>
<text x="809.5" y="372.5" font-size="3.0" font-weight="700" fill="#111" stroke="#111" stroke-width="0.2" text-anchor="middle">J401</text>
<rect x="880.5" y="328.2" width="5.7" height="10.2" fill="#ffff00"/>
<text x="884.8" y="333.3" font-size="4.0" font-weight="700" fill="#000" stroke="#000" stroke-width="0.06" text-anchor="middle" textLength="9.2" lengthAdjust="spacingAndGlyphs" transform="rotate(-90 883.4 333.3)">R831</text>
<rect x="880.5" y="343.0" width="9.5" height="8.2" fill="#ffff00"/>
<text x="885.2" y="346.4" font-size="4.0" font-weight="700" fill="#000" stroke="#000" stroke-width="0.06" text-anchor="middle" textLength="8.7" lengthAdjust="spacingAndGlyphs">R180</text>
<text x="885.2" y="350.6" font-size="4.0" font-weight="700" fill="#000" stroke="#000" stroke-width="0.06" text-anchor="middle" textLength="8.7" lengthAdjust="spacingAndGlyphs">R592</text>
<rect x="880.5" y="359.0" width="9.5" height="14.0" fill="#ffff00"/>
<text x="885.2" y="362.7" font-size="4.0" font-weight="700" fill="#000" stroke="#000" stroke-width="0.06" text-anchor="middle" textLength="8.7" lengthAdjust="spacingAndGlyphs">E132</text>
<text x="885.2" y="367.4" font-size="4.0" font-weight="700" fill="#000" stroke="#000" stroke-width="0.06" text-anchor="middle" textLength="8.7" lengthAdjust="spacingAndGlyphs">C379</text>
<text x="885.2" y="372.1" font-size="4.0" font-weight="700" fill="#000" stroke="#000" stroke-width="0.06" text-anchor="middle" textLength="8.7" lengthAdjust="spacingAndGlyphs">C645</text>
<rect x="880.5" y="385.0" width="10.9" height="20.6" fill="#ffff00"/>
<text x="884.7" y="395.3" font-size="4.0" font-weight="700" fill="#000" stroke="#000" stroke-width="0.06" text-anchor="middle" textLength="12.0" lengthAdjust="spacingAndGlyphs" transform="rotate(-90 883.2 395.3)">R6586</text>
<text x="890.1" y="395.3" font-size="4.0" font-weight="700" fill="#000" stroke="#000" stroke-width="0.06" text-anchor="middle" textLength="12.0" lengthAdjust="spacingAndGlyphs" transform="rotate(-90 888.7 395.3)">C6836</text>
<rect x="897.8" y="345.5" width="55" height="55.7" fill="none" stroke="#e81212" stroke-width="1.1"/>
<path d="M899.4 347.2h2.4v2.4h-2.4zM899.4 350.1h2.4v2.4h-2.4zM899.4 361.4h2.4v2.4h-2.4zM899.4 364.3h2.4v2.4h-2.4zM899.4 367.1h2.4v2.4h-2.4zM899.4 370.0h2.4v2.4h-2.4zM899.4 372.8h2.4v2.4h-2.4zM899.4 375.7h2.4v2.4h-2.4zM899.4 378.6h2.4v2.4h-2.4zM899.4 381.4h2.4v2.4h-2.4zM899.4 384.2h2.4v2.4h-2.4zM902.2 347.2h2.4v2.4h-2.4zM902.2 350.1h2.4v2.4h-2.4zM902.2 352.9h2.4v2.4h-2.4zM902.2 355.8h2.4v2.4h-2.4zM902.2 358.6h2.4v2.4h-2.4zM902.2 361.4h2.4v2.4h-2.4zM902.2 367.1h2.4v2.4h-2.4zM902.2 370.0h2.4v2.4h-2.4zM902.2 375.7h2.4v2.4h-2.4zM902.2 378.6h2.4v2.4h-2.4zM902.2 381.4h2.4v2.4h-2.4zM902.2 384.2h2.4v2.4h-2.4zM902.2 398.5h2.4v2.4h-2.4zM905.1 352.9h2.4v2.4h-2.4zM905.1 355.8h2.4v2.4h-2.4zM905.1 358.6h2.4v2.4h-2.4zM905.1 361.4h2.4v2.4h-2.4zM905.1 364.3h2.4v2.4h-2.4zM905.1 372.8h2.4v2.4h-2.4zM905.1 378.6h2.4v2.4h-2.4zM905.1 381.4h2.4v2.4h-2.4zM905.1 384.2h2.4v2.4h-2.4zM905.1 395.6h2.4v2.4h-2.4zM905.1 398.5h2.4v2.4h-2.4zM907.9 347.2h2.4v2.4h-2.4zM907.9 350.1h2.4v2.4h-2.4zM907.9 352.9h2.4v2.4h-2.4zM907.9 355.8h2.4v2.4h-2.4zM907.9 364.3h2.4v2.4h-2.4zM907.9 367.1h2.4v2.4h-2.4zM907.9 370.0h2.4v2.4h-2.4zM907.9 378.6h2.4v2.4h-2.4zM907.9 381.4h2.4v2.4h-2.4zM907.9 389.9h2.4v2.4h-2.4zM907.9 392.8h2.4v2.4h-2.4zM907.9 395.6h2.4v2.4h-2.4zM907.9 398.5h2.4v2.4h-2.4zM910.8 347.2h2.4v2.4h-2.4zM910.8 350.1h2.4v2.4h-2.4zM910.8 352.9h2.4v2.4h-2.4zM910.8 358.6h2.4v2.4h-2.4zM910.8 361.4h2.4v2.4h-2.4zM910.8 364.3h2.4v2.4h-2.4zM910.8 367.1h2.4v2.4h-2.4zM910.8 370.0h2.4v2.4h-2.4zM910.8 372.8h2.4v2.4h-2.4zM910.8 378.6h2.4v2.4h-2.4zM910.8 387.1h2.4v2.4h-2.4zM910.8 392.8h2.4v2.4h-2.4zM910.8 395.6h2.4v2.4h-2.4zM910.8 398.5h2.4v2.4h-2.4zM913.6 352.9h2.4v2.4h-2.4zM913.6 355.8h2.4v2.4h-2.4zM913.6 361.4h2.4v2.4h-2.4zM913.6 364.3h2.4v2.4h-2.4zM913.6 367.1h2.4v2.4h-2.4zM913.6 370.0h2.4v2.4h-2.4zM913.6 372.8h2.4v2.4h-2.4zM913.6 378.6h2.4v2.4h-2.4zM913.6 381.4h2.4v2.4h-2.4zM913.6 387.1h2.4v2.4h-2.4zM913.6 389.9h2.4v2.4h-2.4zM913.6 392.8h2.4v2.4h-2.4zM913.6 395.6h2.4v2.4h-2.4zM916.5 352.9h2.4v2.4h-2.4zM916.5 361.4h2.4v2.4h-2.4zM916.5 367.1h2.4v2.4h-2.4zM916.5 370.0h2.4v2.4h-2.4zM916.5 372.8h2.4v2.4h-2.4zM916.5 384.2h2.4v2.4h-2.4zM916.5 387.1h2.4v2.4h-2.4zM916.5 392.8h2.4v2.4h-2.4zM916.5 398.5h2.4v2.4h-2.4zM919.4 352.9h2.4v2.4h-2.4zM919.4 355.8h2.4v2.4h-2.4zM919.4 361.4h2.4v2.4h-2.4zM919.4 367.1h2.4v2.4h-2.4zM919.4 370.0h2.4v2.4h-2.4zM919.4 372.8h2.4v2.4h-2.4zM919.4 375.7h2.4v2.4h-2.4zM919.4 392.8h2.4v2.4h-2.4zM919.4 395.6h2.4v2.4h-2.4zM919.4 398.5h2.4v2.4h-2.4zM922.2 352.9h2.4v2.4h-2.4zM922.2 355.8h2.4v2.4h-2.4zM922.2 358.6h2.4v2.4h-2.4zM922.2 361.4h2.4v2.4h-2.4zM922.2 364.3h2.4v2.4h-2.4zM922.2 367.1h2.4v2.4h-2.4zM922.2 370.0h2.4v2.4h-2.4zM922.2 372.8h2.4v2.4h-2.4zM922.2 375.7h2.4v2.4h-2.4zM922.2 392.8h2.4v2.4h-2.4zM922.2 395.6h2.4v2.4h-2.4zM922.2 398.5h2.4v2.4h-2.4zM925.0 347.2h2.4v2.4h-2.4zM925.0 350.1h2.4v2.4h-2.4zM925.0 352.9h2.4v2.4h-2.4zM925.0 355.8h2.4v2.4h-2.4zM925.0 358.6h2.4v2.4h-2.4zM925.0 364.3h2.4v2.4h-2.4zM925.0 370.0h2.4v2.4h-2.4zM925.0 375.7h2.4v2.4h-2.4zM925.0 381.4h2.4v2.4h-2.4zM925.0 392.8h2.4v2.4h-2.4zM925.0 395.6h2.4v2.4h-2.4zM925.0 398.5h2.4v2.4h-2.4zM927.9 347.2h2.4v2.4h-2.4zM927.9 350.1h2.4v2.4h-2.4zM927.9 355.8h2.4v2.4h-2.4zM927.9 358.6h2.4v2.4h-2.4zM927.9 361.4h2.4v2.4h-2.4zM927.9 370.0h2.4v2.4h-2.4zM927.9 381.4h2.4v2.4h-2.4zM927.9 392.8h2.4v2.4h-2.4zM927.9 395.6h2.4v2.4h-2.4zM927.9 398.5h2.4v2.4h-2.4zM930.8 347.2h2.4v2.4h-2.4zM930.8 350.1h2.4v2.4h-2.4zM930.8 352.9h2.4v2.4h-2.4zM930.8 358.6h2.4v2.4h-2.4zM930.8 361.4h2.4v2.4h-2.4zM930.8 364.3h2.4v2.4h-2.4zM930.8 367.1h2.4v2.4h-2.4zM930.8 370.0h2.4v2.4h-2.4zM930.8 372.8h2.4v2.4h-2.4zM930.8 375.7h2.4v2.4h-2.4zM930.8 381.4h2.4v2.4h-2.4zM930.8 387.1h2.4v2.4h-2.4zM930.8 395.6h2.4v2.4h-2.4zM930.8 398.5h2.4v2.4h-2.4zM933.6 347.2h2.4v2.4h-2.4zM933.6 350.1h2.4v2.4h-2.4zM933.6 355.8h2.4v2.4h-2.4zM933.6 364.3h2.4v2.4h-2.4zM933.6 367.1h2.4v2.4h-2.4zM933.6 370.0h2.4v2.4h-2.4zM933.6 372.8h2.4v2.4h-2.4zM933.6 378.6h2.4v2.4h-2.4zM933.6 381.4h2.4v2.4h-2.4zM933.6 384.2h2.4v2.4h-2.4zM933.6 387.1h2.4v2.4h-2.4zM933.6 389.9h2.4v2.4h-2.4zM933.6 392.8h2.4v2.4h-2.4zM933.6 395.6h2.4v2.4h-2.4zM933.6 398.5h2.4v2.4h-2.4zM936.4 347.2h2.4v2.4h-2.4zM936.4 350.1h2.4v2.4h-2.4zM936.4 358.6h2.4v2.4h-2.4zM936.4 361.4h2.4v2.4h-2.4zM936.4 364.3h2.4v2.4h-2.4zM936.4 367.1h2.4v2.4h-2.4zM936.4 375.7h2.4v2.4h-2.4zM936.4 384.2h2.4v2.4h-2.4zM936.4 387.1h2.4v2.4h-2.4zM936.4 389.9h2.4v2.4h-2.4zM936.4 392.8h2.4v2.4h-2.4zM936.4 395.6h2.4v2.4h-2.4zM939.3 347.2h2.4v2.4h-2.4zM939.3 350.1h2.4v2.4h-2.4zM939.3 358.6h2.4v2.4h-2.4zM939.3 361.4h2.4v2.4h-2.4zM939.3 364.3h2.4v2.4h-2.4zM939.3 381.4h2.4v2.4h-2.4zM939.3 387.1h2.4v2.4h-2.4zM939.3 389.9h2.4v2.4h-2.4zM939.3 392.8h2.4v2.4h-2.4zM942.1 347.2h2.4v2.4h-2.4zM942.1 350.1h2.4v2.4h-2.4zM942.1 355.8h2.4v2.4h-2.4zM942.1 364.3h2.4v2.4h-2.4zM942.1 367.1h2.4v2.4h-2.4zM942.1 378.6h2.4v2.4h-2.4zM942.1 381.4h2.4v2.4h-2.4zM942.1 384.2h2.4v2.4h-2.4zM942.1 389.9h2.4v2.4h-2.4zM942.1 395.6h2.4v2.4h-2.4zM945.0 347.2h2.4v2.4h-2.4zM945.0 350.1h2.4v2.4h-2.4zM945.0 352.9h2.4v2.4h-2.4zM945.0 355.8h2.4v2.4h-2.4zM945.0 358.6h2.4v2.4h-2.4zM945.0 361.4h2.4v2.4h-2.4zM945.0 378.6h2.4v2.4h-2.4zM945.0 381.4h2.4v2.4h-2.4zM945.0 384.2h2.4v2.4h-2.4zM945.0 387.1h2.4v2.4h-2.4zM945.0 389.9h2.4v2.4h-2.4zM945.0 392.8h2.4v2.4h-2.4zM945.0 395.6h2.4v2.4h-2.4zM945.0 398.5h2.4v2.4h-2.4zM947.9 347.2h2.4v2.4h-2.4zM947.9 350.1h2.4v2.4h-2.4zM947.9 352.9h2.4v2.4h-2.4zM947.9 355.8h2.4v2.4h-2.4zM947.9 364.3h2.4v2.4h-2.4zM947.9 367.1h2.4v2.4h-2.4zM947.9 372.8h2.4v2.4h-2.4zM947.9 387.1h2.4v2.4h-2.4zM947.9 389.9h2.4v2.4h-2.4zM947.9 395.6h2.4v2.4h-2.4zM947.9 398.5h2.4v2.4h-2.4zM950.7 347.2h2.4v2.4h-2.4zM950.7 350.1h2.4v2.4h-2.4zM950.7 352.9h2.4v2.4h-2.4zM950.7 355.8h2.4v2.4h-2.4zM950.7 358.6h2.4v2.4h-2.4zM950.7 364.3h2.4v2.4h-2.4zM950.7 367.1h2.4v2.4h-2.4zM950.7 372.8h2.4v2.4h-2.4zM950.7 375.7h2.4v2.4h-2.4zM950.7 378.6h2.4v2.4h-2.4zM950.7 381.4h2.4v2.4h-2.4zM950.7 384.2h2.4v2.4h-2.4zM950.7 387.1h2.4v2.4h-2.4zM950.7 389.9h2.4v2.4h-2.4zM950.7 392.8h2.4v2.4h-2.4zM950.7 398.5h2.4v2.4h-2.4z" fill="#ffff00"/>
<text x="925.3" y="373.5" font-size="3.0" font-weight="700" fill="#111" stroke="#111" stroke-width="0.2" text-anchor="middle">U301</text>
<rect x="960.0" y="345.5" width="9.0" height="18.5" fill="#ffff00"/>
<text x="964.5" y="349.2" font-size="4.0" font-weight="700" fill="#000" stroke="#000" stroke-width="0.06" text-anchor="middle" textLength="8.3" lengthAdjust="spacingAndGlyphs">E269</text>
<text x="964.5" y="353.8" font-size="4.0" font-weight="700" fill="#000" stroke="#000" stroke-width="0.06" text-anchor="middle" textLength="8.3" lengthAdjust="spacingAndGlyphs">E987</text>
<text x="964.5" y="358.5" font-size="4.0" font-weight="700" fill="#000" stroke="#000" stroke-width="0.06" text-anchor="middle" textLength="8.3" lengthAdjust="spacingAndGlyphs">R622</text>
<text x="964.5" y="363.1" font-size="4.0" font-weight="700" fill="#000" stroke="#000" stroke-width="0.06" text-anchor="middle" textLength="8.3" lengthAdjust="spacingAndGlyphs">C778</text>
<rect x="960.0" y="366.0" width="8.0" height="6.0" fill="#ffff00"/>
<text x="964.0" y="370.4" font-size="4.0" font-weight="700" fill="#000" stroke="#000" stroke-width="0.06" text-anchor="middle" textLength="7.4" lengthAdjust="spacingAndGlyphs">C922</text>
<rect x="962.0" y="374.0" width="6.0" height="16.0" fill="#ffff00"/>
<text x="966.4" y="382.0" font-size="4.0" font-weight="700" fill="#000" stroke="#000" stroke-width="0.06" text-anchor="middle" textLength="12.0" lengthAdjust="spacingAndGlyphs" transform="rotate(-90 965.0 382.0)">L3298</text>
<rect x="959.0" y="391.5" width="10.0" height="18.5" fill="#ffff00"/>
<text x="964.0" y="396.0" font-size="4.0" font-weight="700" fill="#000" stroke="#000" stroke-width="0.06" text-anchor="middle" textLength="9.2" lengthAdjust="spacingAndGlyphs">L384</text>
<text x="964.0" y="402.1" font-size="4.0" font-weight="700" fill="#000" stroke="#000" stroke-width="0.06" text-anchor="middle" textLength="9.2" lengthAdjust="spacingAndGlyphs">C699</text>
<text x="964.0" y="408.3" font-size="4.0" font-weight="700" fill="#000" stroke="#000" stroke-width="0.06" text-anchor="middle" textLength="9.2" lengthAdjust="spacingAndGlyphs">R434</text>
<rect x="894.0" y="418.0" width="4.0" height="3.5" fill="#ffff00"/>
<rect x="899.0" y="418.0" width="3.0" height="3.5" fill="#ffff00"/>
<rect x="904.0" y="418.0" width="3.0" height="3.5" fill="#ffff00"/>
<rect x="908.5" y="418.0" width="3.5" height="3.5" fill="#ffff00"/>
<text x="894.0" y="425.0" font-size="3.0" font-weight="700" fill="#111" stroke="#111" stroke-width="0.2" text-anchor="start">T607T608</text>
<rect x="920.2" y="417.2" width="32.0" height="9.0" fill="#ffff00"/>
<text x="936.2" y="420.8" font-size="4.0" font-weight="700" fill="#000" stroke="#000" stroke-width="0.06" text-anchor="middle" textLength="12.0" lengthAdjust="spacingAndGlyphs">C476</text>
<text x="936.2" y="425.3" font-size="4.0" font-weight="700" fill="#000" stroke="#000" stroke-width="0.06" text-anchor="middle" textLength="12.0" lengthAdjust="spacingAndGlyphs">R295</text>
<text x="951.5" y="431.8" font-size="4.6" font-weight="400" fill="#111" stroke="#111" stroke-width="0.2" text-anchor="start">BT</text>
<text x="805.5" y="428.8" font-size="4.6" font-weight="400" fill="#111" stroke="#111" stroke-width="0.2" text-anchor="start">BT</text>
<rect x="784.8" y="424.5" width="18.7" height="10.5" fill="#ffff00"/>
<text x="794.0" y="431.5" font-size="3.0" font-weight="700" fill="#111" stroke="#111" stroke-width="0.2" text-anchor="middle">ANT401</text>
<rect x="961.7" y="418.8" width="17.9" height="13.2" fill="#ffff00"/>
<text x="970.6" y="426.5" font-size="3.0" font-weight="700" fill="#111" stroke="#111" stroke-width="0.2" text-anchor="middle">ANT402</text>
<path d="M790.4 452.7L810.6 432.9H876V574.4H790.4Z" fill="none" stroke="#e65a5a" stroke-width="1"/>
<path d="M886.8 452.7L906.6 432.9H973V574.4H886.8Z" fill="none" stroke="#e65a5a" stroke-width="1"/>
<rect x="784.9" y="490.3" width="93.4" height="68.3" fill="none" stroke="#e65a5a" stroke-width="1"/>
<rect x="881.9" y="490.3" width="92.6" height="68.3" fill="none" stroke="#e65a5a" stroke-width="1"/>
<text x="821.0" y="441.0" font-size="5" font-weight="400" fill="#111" stroke="#111" stroke-width="0.2" text-anchor="start">SIM1</text>
<text x="923.0" y="441.0" font-size="5" font-weight="400" fill="#111" stroke="#111" stroke-width="0.2" text-anchor="start">SIM2</text>
<rect x="821.0" y="483.3" width="8.4" height="10.3" fill="#ffff00"/>
<rect x="821.0" y="555.6" width="8.4" height="10.9" fill="#ffff00"/>
<rect x="835.4" y="483.3" width="8.9" height="10.3" fill="#ffff00"/>
<rect x="835.4" y="555.6" width="8.9" height="10.9" fill="#ffff00"/>
<rect x="849.8" y="483.3" width="8.3" height="10.3" fill="#ffff00"/>
<rect x="849.8" y="555.6" width="8.3" height="10.9" fill="#ffff00"/>
<rect x="917.1" y="483.3" width="8.7" height="10.3" fill="#ffff00"/>
<rect x="917.1" y="555.6" width="8.7" height="10.9" fill="#ffff00"/>
<rect x="932.0" y="483.3" width="8.3" height="10.3" fill="#ffff00"/>
<rect x="932.0" y="555.6" width="8.3" height="10.9" fill="#ffff00"/>
<rect x="946.2" y="483.3" width="8.5" height="10.3" fill="#ffff00"/>
<rect x="946.2" y="555.6" width="8.5" height="10.9" fill="#ffff00"/>
<rect x="783.9" y="515.0" width="8.9" height="10.0" fill="#ffff00"/>
<rect x="871.6" y="515.0" width="17.8" height="10.0" fill="#ffff00"/>
<rect x="968.0" y="515.0" width="8.0" height="10.0" fill="#ffff00"/>
<rect x="783.9" y="529.9" width="8.9" height="9.9" fill="#ffff00"/>
<rect x="871.6" y="529.9" width="17.8" height="9.9" fill="#ffff00"/>
<rect x="968.0" y="529.9" width="8.0" height="9.9" fill="#ffff00"/>
<path d="M851.2 478.4H858L854.6 482.4Z" fill="#e81212"/>
<text x="833.0" y="514.0" font-size="3.0" font-weight="700" fill="#111" stroke="#111" stroke-width="0.2" text-anchor="middle">J403</text>
<text x="929.5" y="513.0" font-size="3.0" font-weight="700" fill="#111" stroke="#111" stroke-width="0.2" text-anchor="middle">J402</text>
<path d="M832 519v5h4M928 517v6h4" fill="none" stroke="#e81212" stroke-width="0.6"/><circle cx="833.5" cy="523.5" r="2.5" fill="none" stroke="#e8a0a0" stroke-width="0.5"/>
<rect x="929.4" y="449.7" width="19.8" height="18.8" fill="#ffff00"/>
<text x="939.3" y="460.5" font-size="3.0" font-weight="700" fill="#111" stroke="#111" stroke-width="0.2" text-anchor="middle">U501</text>
<circle cx="931" cy="450.5" r="1.5" fill="#e81212"/>
<rect x="901.5" y="453.0" width="10.5" height="27.0" fill="#ffff00"/>
<text x="906.8" y="457.1" font-size="4.0" font-weight="700" fill="#000" stroke="#000" stroke-width="0.06" text-anchor="middle" textLength="9.7" lengthAdjust="spacingAndGlyphs">R572</text>
<text x="906.8" y="462.5" font-size="4.0" font-weight="700" fill="#000" stroke="#000" stroke-width="0.06" text-anchor="middle" textLength="9.7" lengthAdjust="spacingAndGlyphs">C793</text>
<text x="906.8" y="467.9" font-size="4.0" font-weight="700" fill="#000" stroke="#000" stroke-width="0.06" text-anchor="middle" textLength="9.7" lengthAdjust="spacingAndGlyphs">C980</text>
<text x="906.8" y="473.3" font-size="4.0" font-weight="700" fill="#000" stroke="#000" stroke-width="0.06" text-anchor="middle" textLength="9.7" lengthAdjust="spacingAndGlyphs">C160</text>
<text x="906.8" y="478.7" font-size="4.0" font-weight="700" fill="#000" stroke="#000" stroke-width="0.06" text-anchor="middle" textLength="9.7" lengthAdjust="spacingAndGlyphs">C331</text>
<rect x="913.0" y="450.5" width="6.5" height="6.5" fill="#ffff00"/>
<text x="917.7" y="453.8" font-size="4.0" font-weight="700" fill="#000" stroke="#000" stroke-width="0.06" text-anchor="middle" textLength="5.9" lengthAdjust="spacingAndGlyphs" transform="rotate(-90 916.2 453.8)">R43</text>
<rect x="920.0" y="449.0" width="7.0" height="11.0" fill="#ffff00"/>
<text x="923.0" y="454.5" font-size="3.5" font-weight="700" fill="#000" stroke="#000" stroke-width="0.06" text-anchor="middle" textLength="9.9" lengthAdjust="spacingAndGlyphs" transform="rotate(-90 921.8 454.5)">R4229</text>
<text x="926.5" y="454.5" font-size="3.5" font-weight="700" fill="#000" stroke="#000" stroke-width="0.06" text-anchor="middle" textLength="9.9" lengthAdjust="spacingAndGlyphs" transform="rotate(-90 925.2 454.5)">C0420</text>
<rect x="914.0" y="462.0" width="13.0" height="5.0" fill="#ffff00"/>
<text x="920.5" y="465.9" font-size="4.0" font-weight="700" fill="#000" stroke="#000" stroke-width="0.06" text-anchor="middle" textLength="12.0" lengthAdjust="spacingAndGlyphs">L261</text>
<rect x="917.0" y="470.0" width="10.0" height="9.0" fill="#ffff00"/>
<text x="920.9" y="474.5" font-size="4.0" font-weight="700" fill="#000" stroke="#000" stroke-width="0.06" text-anchor="middle" textLength="8.1" lengthAdjust="spacingAndGlyphs" transform="rotate(-90 919.5 474.5)">C11</text>
<text x="925.9" y="474.5" font-size="4.0" font-weight="700" fill="#000" stroke="#000" stroke-width="0.06" text-anchor="middle" textLength="8.1" lengthAdjust="spacingAndGlyphs" transform="rotate(-90 924.5 474.5)">C44</text>
<rect x="928.0" y="443.0" width="12.0" height="4.5" fill="#ffff00"/>
<text x="934.0" y="446.6" font-size="4.0" font-weight="700" fill="#000" stroke="#000" stroke-width="0.06" text-anchor="middle" textLength="11.0" lengthAdjust="spacingAndGlyphs">C579</text>
<rect x="941.0" y="442.0" width="12.0" height="5.0" fill="#ffff00"/>
<text x="947.0" y="445.9" font-size="4.0" font-weight="700" fill="#000" stroke="#000" stroke-width="0.06" text-anchor="middle" textLength="11.0" lengthAdjust="spacingAndGlyphs">C500</text>
<rect x="954.0" y="444.0" width="6.0" height="25.0" fill="#ffff00"/>
<text x="958.4" y="456.5" font-size="4.0" font-weight="700" fill="#000" stroke="#000" stroke-width="0.06" text-anchor="middle" textLength="12.0" lengthAdjust="spacingAndGlyphs" transform="rotate(-90 957.0 456.5)">L5667</text>
<rect x="931.0" y="473.0" width="11.0" height="8.0" fill="#ffff00"/>
<text x="936.5" y="476.4" font-size="4.0" font-weight="700" fill="#000" stroke="#000" stroke-width="0.06" text-anchor="middle" textLength="10.1" lengthAdjust="spacingAndGlyphs">C397</text>
<text x="936.5" y="480.4" font-size="4.0" font-weight="700" fill="#000" stroke="#000" stroke-width="0.06" text-anchor="middle" textLength="10.1" lengthAdjust="spacingAndGlyphs">C285</text>
<rect x="943.0" y="473.0" width="6.0" height="8.0" fill="#ffff00"/>
<text x="946.0" y="476.4" font-size="4.0" font-weight="700" fill="#000" stroke="#000" stroke-width="0.06" text-anchor="middle" textLength="5.5" lengthAdjust="spacingAndGlyphs">C416</text>
<text x="946.0" y="480.4" font-size="4.0" font-weight="700" fill="#000" stroke="#000" stroke-width="0.06" text-anchor="middle" textLength="5.5" lengthAdjust="spacingAndGlyphs">C784</text>
<rect x="950.0" y="473.0" width="12.0" height="8.0" fill="#ffff00"/>
<text x="956.0" y="476.4" font-size="4.0" font-weight="700" fill="#000" stroke="#000" stroke-width="0.06" text-anchor="middle" textLength="11.0" lengthAdjust="spacingAndGlyphs">C855</text>
<text x="956.0" y="480.4" font-size="4.0" font-weight="700" fill="#000" stroke="#000" stroke-width="0.06" text-anchor="middle" textLength="11.0" lengthAdjust="spacingAndGlyphs">E744</text>
<path d="M947.5 479h5l-2.5 3z" fill="#e81212"/>
<rect x="808.0" y="562.0" width="9.0" height="10.0" fill="#ffff00"/>
<text x="811.7" y="567.0" font-size="4.0" font-weight="700" fill="#000" stroke="#000" stroke-width="0.06" text-anchor="middle" textLength="9.0" lengthAdjust="spacingAndGlyphs" transform="rotate(-90 810.2 567.0)">C598</text>
<text x="816.2" y="567.0" font-size="4.0" font-weight="700" fill="#000" stroke="#000" stroke-width="0.06" text-anchor="middle" textLength="9.0" lengthAdjust="spacingAndGlyphs" transform="rotate(-90 814.8 567.0)">R178</text>
<rect x="834.0" y="569.0" width="19.0" height="4.0" fill="#ffff00"/>
<text x="843.5" y="572.4" font-size="4.0" font-weight="700" fill="#000" stroke="#000" stroke-width="0.06" text-anchor="middle" textLength="12.0" lengthAdjust="spacingAndGlyphs">L049</text>
<rect x="931.0" y="569.0" width="12.0" height="4.0" fill="#ffff00"/>
<text x="937.0" y="572.4" font-size="4.0" font-weight="700" fill="#000" stroke="#000" stroke-width="0.06" text-anchor="middle" textLength="11.0" lengthAdjust="spacingAndGlyphs">C222</text>
<rect x="946.0" y="569.0" width="10.0" height="4.0" fill="#ffff00"/>
<text x="951.0" y="572.4" font-size="4.0" font-weight="700" fill="#000" stroke="#000" stroke-width="0.06" text-anchor="middle" textLength="9.2" lengthAdjust="spacingAndGlyphs">L711</text>
<text x="855.7" y="649" font-size="5" font-weight="400" fill="#222" stroke="#222" stroke-width="0.1" textLength="50" lengthAdjust="spacingAndGlyphs">A518_MAIN_PCB_V1.0</text>
<rect x="806.3" y="732.0" width="23.7" height="10.6" fill="#ffff00"/>
<text x="818.0" y="738.5" font-size="3.0" font-weight="700" fill="#111" stroke="#111" stroke-width="0.2" text-anchor="middle">TP301</text>
<rect x="806.3" y="748.7" width="23.7" height="11.0" fill="#ffff00"/>
<text x="818.0" y="755.0" font-size="3.0" font-weight="700" fill="#111" stroke="#111" stroke-width="0.2" text-anchor="middle">TP302</text>
<text x="833.7" y="742.2" font-size="4" font-weight="400" fill="#111" stroke="#111" stroke-width="0.2" text-anchor="start">VIB+</text>
<text x="833.7" y="754.2" font-size="4" font-weight="400" fill="#111" stroke="#111" stroke-width="0.2" text-anchor="start">VIB-</text>
<path d="M875.2 738.4H886V735.5H908.5V738.4H918.5V783H875.2Z" fill="none" stroke="#e81212" stroke-width="1.2"/>
<rect x="886.2" y="730.4" width="22.1" height="6.1" fill="#ffff00"/>
<rect x="867.9" y="737.7" width="7.8" height="9.8" fill="#ffff00"/>
<rect x="918.0" y="737.7" width="8.6" height="9.8" fill="#ffff00"/>
<rect x="872.8" y="764.6" width="6.8" height="11.0" fill="#ffff00"/>
<rect x="913.9" y="764.6" width="6.6" height="11.0" fill="#ffff00"/>
<text x="896.5" y="755.0" font-size="3.0" font-weight="700" fill="#111" stroke="#111" stroke-width="0.2" text-anchor="middle">J801</text>
<circle cx="887" cy="728.3" r="1.2" fill="#e81212"/>
<path d="M931.2 736.6H961V751.1H956.8V778.7H934.7V751.1H931.2Z" fill="none" stroke="#e81212" stroke-width="1.2"/>
<rect x="934.7" y="751.5" width="21.6" height="26.7" fill="#ffff00"/>
<text x="945.5" y="762.0" font-size="3.0" font-weight="700" fill="#111" stroke="#111" stroke-width="0.2" text-anchor="middle">J702</text>
<path d="M944.5 752v26" stroke="#fff" stroke-width="0.5"/>
<rect x="921.7" y="754.8" width="8.6" height="15.9" fill="#ffff00"/>
<text x="926.0" y="762.5" font-size="2.3" font-weight="700" fill="#111" stroke="#111" stroke-width="0.2" text-anchor="middle" transform="rotate(-90 926.0 762.5)">C704</text>
<circle cx="965.7" cy="724.3" r="5" fill="#ffff00"/>
<text x="957.0" y="726.3" font-size="2.8" font-weight="700" fill="#111" stroke="#111" stroke-width="0.2" text-anchor="start">MARK902</text>
<path d="M961 762l-1.5 1 1.5 1" stroke="#222" stroke-width="0.7" fill="none"/>
</svg>
<div class="a" style="left:1505px;top:161px;width:15px;height:673px;background:#fff"></div>
<svg style="left:1508px;top:166px" width="9" height="6" viewBox="0 0 9 6"><path d="M0.8 5.2L4.5 1.5L8.2 5.2" stroke="#555" stroke-width="1.4" fill="none"/></svg>
<div class="a" style="left:1505px;top:178px;width:15px;height:320px;background:#dedede;border-top:1px solid #c4c4c4;border-bottom:1px solid #a8a8a8"></div>
<svg style="left:1509px;top:334px" width="8" height="7" viewBox="0 0 8 7"><path d="M0 0.5h8M0 3.5h8M0 6.5h8" stroke="#606060" stroke-width="1.2"/></svg>
<div class="a" style="left:1505px;top:819px;width:15px;height:1px;background:#d0d0d0"></div>
<svg style="left:1508px;top:825px" width="9" height="6" viewBox="0 0 9 6"><path d="M0.8 0.8L4.5 4.5L8.2 0.8" stroke="#555" stroke-width="1.4" fill="none"/></svg>
<div class="a" style="left:1520px;top:111px;width:1px;height:748px;background:#62c9e9"></div>
<div class="a" style="left:261px;top:834px;width:1259px;height:2px;background:#f2f6f8"></div>
<div class="a" style="left:0px;top:836px;width:1520px;height:20px;background:#46688d"></div>
<div class="a" style="left:0px;top:836px;width:1520px;height:1px;background:#33587a"></div>
<div class="m" style="left:-1px;top:844px;color:#000;">6649 / 7038</div>
<div class="m" style="left:1290px;top:844px;color:#fff;">Current [A518_Main_PCB_V1.0_PLACEMENT]</div>
<div class="a" style="left:0px;top:856px;width:1521px;height:3px;background:#68c3e2"></div>
</body></html>
